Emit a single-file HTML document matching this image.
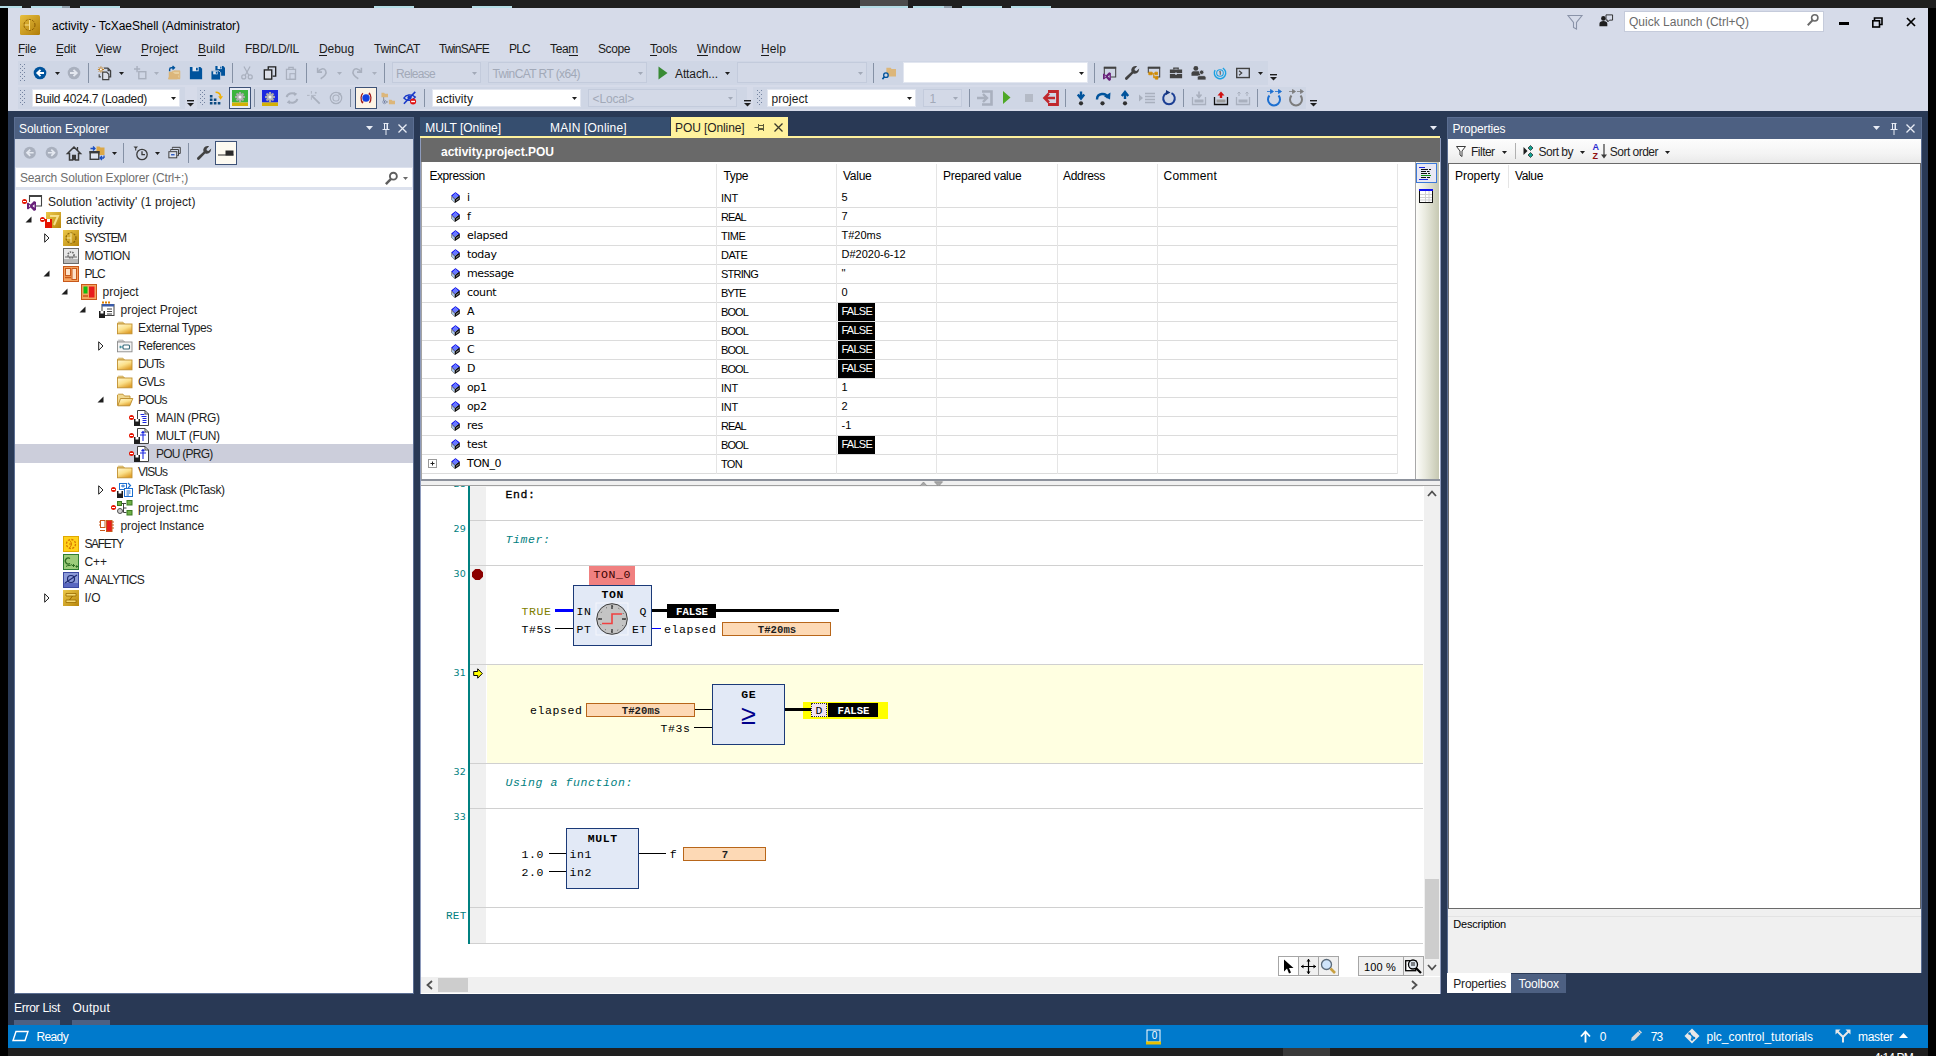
<!DOCTYPE html>
<html><head><meta charset="utf-8"><title>activity - TcXaeShell</title>
<style>
html,body{margin:0;padding:0;}
body{width:1936px;height:1056px;position:relative;overflow:hidden;background:#1e1e1e;font-family:"Liberation Sans",sans-serif;font-size:12px;}
body div,body svg{position:absolute;box-sizing:border-box;}
svg{overflow:visible;}
</style></head><body>
<div style="left:0px;top:0px;width:1936px;height:1056px;background:#1f1f1f;"></div>
<div style="left:0px;top:8px;width:8px;height:1048px;background:#000;"></div>
<div style="left:1928px;top:8px;width:8px;height:1048px;background:#000;"></div>
<div style="left:0px;top:6px;width:22px;height:2px;background:#b4dde6;"></div>
<div style="left:31px;top:6px;width:31px;height:2px;background:#b4dde6;"></div>
<div style="left:80px;top:6px;width:40px;height:2px;background:#b4dde6;"></div>
<div style="left:374px;top:6px;width:40px;height:2px;background:#b4dde6;"></div>
<div style="left:472px;top:6px;width:40px;height:2px;background:#b4dde6;"></div>
<div style="left:860px;top:6px;width:48px;height:2px;background:#b4dde6;"></div>
<div style="left:913px;top:6px;width:31px;height:2px;background:#b4dde6;"></div>
<div style="left:962px;top:6px;width:40px;height:2px;background:#b4dde6;"></div>
<div style="left:1011px;top:6px;width:40px;height:2px;background:#b4dde6;"></div>
<div style="left:62px;top:6px;width:8px;height:2px;background:#8fa0ac;"></div>
<div style="left:944px;top:6px;width:8px;height:2px;background:#8fa0ac;"></div>
<div style="left:860px;top:0px;width:48px;height:6px;background:#4c4c4c;"></div>
<div style="left:8px;top:8px;width:1920px;height:103px;background:#d6dbe9;"></div>
<div style="left:8px;top:111px;width:1920px;height:914px;background:#293955;"></div>
<div style="left:8px;top:1025px;width:1920px;height:23px;background:#007acc;"></div>
<div style="left:1283px;top:1048px;width:47px;height:8px;background:#3a3a3a;"></div>
<div style="left:1874.00px;top:1050.00px;line-height:16px;height:16px;color:#fff;white-space:pre;font-size:12px;font-family:'Liberation Sans',sans-serif;letter-spacing:-0.815px;">4:14 PM</div>
<svg style="left:20px;top:15px;" width="20" height="20" viewBox="0 0 20 20"><defs><linearGradient id="tcg" x1="0" y1="0" x2="1" y2="1"><stop offset="0" stop-color="#e8c040"/><stop offset="1" stop-color="#b07c08"/></linearGradient></defs><rect width="20" height="20" rx="1.500" fill="url(#tcg)"/><circle cx="9.500" cy="10" r="5.500" fill="none" stroke="#8a5a00" stroke-width="1" stroke-dasharray="2.200 1.300"/><path d="M9.500 5v10M5 10h5" stroke="#f8e090" stroke-width="1"/></svg>
<div style="left:52.00px;top:18.00px;line-height:16px;height:16px;color:#000;white-space:pre;font-size:12px;font-family:'Liberation Sans',sans-serif;letter-spacing:-0.032px;">activity - TcXaeShell (Administrator)</div>
<svg style="left:1566.5px;top:13.5px;" width="16" height="16" viewBox="0 0 16 16"><path d="M1 1.500h14L9.500 8.500v6.500L6.500 13.500V8.500z" fill="none" stroke="#8a93a8" stroke-width="1.100"/></svg>
<svg style="left:1599.0px;top:14.0px;" width="14" height="14" viewBox="0 0 16 16"><circle cx="5" cy="5" r="2.600" fill="#1e1e1e"/><path d="M0.500 14v-3c0-2 2-3 4.500-3s4.500 1 4.500 3v3z" fill="#1e1e1e"/><path d="M8 1h7.500v6H12l-2 2V7H8z" fill="#d6dbe9" stroke="#1e1e1e" stroke-width="1"/></svg>
<div style="left:1624px;top:11px;width:200px;height:21px;background:#fff;border:1px solid #c5cbdb;"></div>
<div style="left:1629.00px;top:14.00px;line-height:16px;height:16px;color:#6a6a6a;white-space:pre;font-size:12px;font-family:'Liberation Sans',sans-serif;letter-spacing:0.013px;">Quick Launch (Ctrl+Q)</div>
<svg style="left:1806.0px;top:13.0px;" width="14" height="14" viewBox="0 0 16 16"><circle cx="10" cy="5.500" r="3.600" fill="none" stroke="#6a6a6a" stroke-width="1.800"/><path d="M7.500 8.300L2 14" stroke="#6a6a6a" stroke-width="2.200"/></svg>
<div style="left:1839px;top:22px;width:10px;height:3px;background:#000;"></div>
<svg style="left:1872px;top:17px;" width="11" height="11" viewBox="0 0 11 11"><path d="M2.500 3V1h7.500v6.500H8" fill="none" stroke="#000" stroke-width="1.600"/><rect x="0.800" y="3.800" width="6.700" height="6.200" fill="none" stroke="#000" stroke-width="1.600"/></svg>
<svg style="left:1906px;top:17px;" width="10" height="10" viewBox="0 0 10 10"><path d="M1 1l8 8M9 1l-8 8" stroke="#000" stroke-width="1.700"/></svg>
<div style="left:18.00px;top:41.00px;line-height:16px;height:16px;color:#1b1b1b;white-space:pre;font-size:12px;font-family:'Liberation Sans',sans-serif;letter-spacing:-0.336px;">File</div>
<div style="left:18.0px;top:54.5px;width:6.3px;height:1px;background:#1b1b1b;"></div>
<div style="left:56.00px;top:41.00px;line-height:16px;height:16px;color:#1b1b1b;white-space:pre;font-size:12px;font-family:'Liberation Sans',sans-serif;letter-spacing:-0.172px;">Edit</div>
<div style="left:56.0px;top:54.5px;width:7.2px;height:1px;background:#1b1b1b;"></div>
<div style="left:95.50px;top:41.00px;line-height:16px;height:16px;color:#1b1b1b;white-space:pre;font-size:12px;font-family:'Liberation Sans',sans-serif;letter-spacing:-0.074px;">View</div>
<div style="left:95.5px;top:54.5px;width:7.4px;height:1px;background:#1b1b1b;"></div>
<div style="left:141.00px;top:41.00px;line-height:16px;height:16px;color:#1b1b1b;white-space:pre;font-size:12px;font-family:'Liberation Sans',sans-serif;letter-spacing:-0.051px;">Project</div>
<div style="left:141.0px;top:54.5px;width:7.4px;height:1px;background:#1b1b1b;"></div>
<div style="left:198.00px;top:41.00px;line-height:16px;height:16px;color:#1b1b1b;white-space:pre;font-size:12px;font-family:'Liberation Sans',sans-serif;letter-spacing:0.062px;">Build</div>
<div style="left:198.0px;top:54.5px;width:7.6px;height:1px;background:#1b1b1b;"></div>
<div style="left:245.00px;top:41.00px;line-height:16px;height:16px;color:#1b1b1b;white-space:pre;font-size:12px;font-family:'Liberation Sans',sans-serif;letter-spacing:-0.224px;">FBD/LD/IL</div>
<div style="left:319.00px;top:41.00px;line-height:16px;height:16px;color:#1b1b1b;white-space:pre;font-size:12px;font-family:'Liberation Sans',sans-serif;letter-spacing:-0.075px;">Debug</div>
<div style="left:319.0px;top:54.5px;width:8.1px;height:1px;background:#1b1b1b;"></div>
<div style="left:374.00px;top:41.00px;line-height:16px;height:16px;color:#1b1b1b;white-space:pre;font-size:12px;font-family:'Liberation Sans',sans-serif;letter-spacing:-0.257px;">TwinCAT</div>
<div style="left:439.00px;top:41.00px;line-height:16px;height:16px;color:#1b1b1b;white-space:pre;font-size:12px;font-family:'Liberation Sans',sans-serif;letter-spacing:-0.752px;">TwinSAFE</div>
<div style="left:509.00px;top:41.00px;line-height:16px;height:16px;color:#1b1b1b;white-space:pre;font-size:12px;font-family:'Liberation Sans',sans-serif;letter-spacing:-0.781px;">PLC</div>
<div style="left:550.00px;top:41.00px;line-height:16px;height:16px;color:#1b1b1b;white-space:pre;font-size:12px;font-family:'Liberation Sans',sans-serif;letter-spacing:-0.336px;">Team</div>
<div style="left:568.5px;top:54.5px;width:9.0px;height:1px;background:#1b1b1b;"></div>
<div style="left:598.00px;top:41.00px;line-height:16px;height:16px;color:#1b1b1b;white-space:pre;font-size:12px;font-family:'Liberation Sans',sans-serif;letter-spacing:-0.406px;">Scope</div>
<div style="left:650.00px;top:41.00px;line-height:16px;height:16px;color:#1b1b1b;white-space:pre;font-size:12px;font-family:'Liberation Sans',sans-serif;letter-spacing:-0.203px;">Tools</div>
<div style="left:650.0px;top:54.5px;width:6.6px;height:1px;background:#1b1b1b;"></div>
<div style="left:697.00px;top:41.00px;line-height:16px;height:16px;color:#1b1b1b;white-space:pre;font-size:12px;font-family:'Liberation Sans',sans-serif;letter-spacing:0.219px;">Window</div>
<div style="left:697.0px;top:54.5px;width:11.2px;height:1px;background:#1b1b1b;"></div>
<div style="left:761.00px;top:41.00px;line-height:16px;height:16px;color:#1b1b1b;white-space:pre;font-size:12px;font-family:'Liberation Sans',sans-serif;letter-spacing:0.078px;">Help</div>
<div style="left:761.0px;top:54.5px;width:8.3px;height:1px;background:#1b1b1b;"></div>
<div style="left:18px;top:61px;width:1250px;height:24px;background:#cfd6e5;"></div>
<svg style="left:20px;top:64px;" width="5" height="17" viewBox="0 0 5 17"><rect x="0" y="0" width="1" height="1" fill="#7483a0"/><rect x="4" y="0" width="1" height="1" fill="#7483a0"/><rect x="2" y="2" width="1" height="1" fill="#7483a0"/><rect x="0" y="4" width="1" height="1" fill="#7483a0"/><rect x="4" y="4" width="1" height="1" fill="#7483a0"/><rect x="2" y="6" width="1" height="1" fill="#7483a0"/><rect x="0" y="8" width="1" height="1" fill="#7483a0"/><rect x="4" y="8" width="1" height="1" fill="#7483a0"/><rect x="2" y="10" width="1" height="1" fill="#7483a0"/><rect x="0" y="12" width="1" height="1" fill="#7483a0"/><rect x="4" y="12" width="1" height="1" fill="#7483a0"/><rect x="2" y="14" width="1" height="1" fill="#7483a0"/><rect x="0" y="16" width="1" height="1" fill="#7483a0"/><rect x="4" y="16" width="1" height="1" fill="#7483a0"/></svg>
<svg style="left:32.0px;top:65.0px;" width="16" height="16" viewBox="0 0 16 16"><circle cx="8" cy="8" r="6.300" fill="#00539c"/><path d="M12 8H5.5M8.5 4.8L5.2 8l3.3 3.2" stroke="#fff" stroke-width="1.8" fill="none"/></svg>
<svg style="left:54.5px;top:72.0px;" width="5" height="3" viewBox="0 0 5 3"><path d="M0 0h5l-2.5 3z" fill="#1e1e1e"/></svg>
<svg style="left:66.0px;top:65.0px;" width="16" height="16" viewBox="0 0 16 16"><circle cx="8" cy="8" r="6.300" fill="#a9b0be"/><path d="M4 8h6.5M7.5 4.8L10.8 8l-3.3 3.2" stroke="#e4e8f0" stroke-width="1.8" fill="none"/></svg>
<div style="left:88px;top:63px;width:1px;height:20px;background:#8591a5;"></div>
<svg style="left:97.0px;top:66.0px;" width="14" height="14" viewBox="0 0 16 16"><path d="M8 2.5h4.5l3 3v7h-2.5" fill="none" stroke="#424242" stroke-width="1.5"/><path d="M12 2.5v3.5h3.5" fill="#424242"/><path d="M6.5 7h4.5l2.5 2.5V15.5h-7z" fill="#dcdfe8" stroke="#424242" stroke-width="1.3"/><path d="M2.5 9.5v3h2" fill="none" stroke="#424242" stroke-width="1.3"/><path d="M4.5 0.5v7M1 4h7M2 1.500l5 5M7 1.5l-5 5" stroke="#c27d1a" stroke-width="1.1"/><circle cx="4.5" cy="4" r="1.1" fill="#fff"/></svg>
<svg style="left:119.0px;top:72.0px;" width="5" height="3" viewBox="0 0 5 3"><path d="M0 0h5l-2.5 3z" fill="#1e1e1e"/></svg>
<svg style="left:133.5px;top:66.0px;" width="14" height="14" viewBox="0 0 16 16"><rect x="5.5" y="6.5" width="8" height="8" fill="none" stroke="#a9b0be" stroke-width="1.6"/><path d="M3.5 0v7M0 3.5h7" stroke="#a9b0be" stroke-width="1.6"/></svg>
<svg style="left:154.0px;top:72.0px;" width="5" height="3" viewBox="0 0 5 3"><path d="M0 0h5l-2.5 3z" fill="#a9b0be"/></svg>
<svg style="left:166.5px;top:66.0px;" width="14" height="14" viewBox="0 0 16 16"><path d="M2 6.5h5l1-1.5h7v10H2z" fill="#dcb67a"/><path d="M5.5 6h9v8" fill="#e8d0a0" stroke="#dcb67a"/><path d="M1 15l2.5-6h10.5l-2.5 6z" fill="#dcb67a"/><path d="M3 6V4a2 2 0 0 1 2-2h3M6.3 0l2.2 2-2.2 2" fill="none" stroke="#00539c" stroke-width="1.6"/></svg>
<svg style="left:188.5px;top:66.0px;" width="14" height="14" viewBox="0 0 16 16"><path d="M1 1h12l2 2v12H1z" fill="#00539c"/><rect x="4" y="1" width="7" height="5" fill="#dfe5f0"/><rect x="8" y="2" width="2" height="3" fill="#00539c"/></svg>
<svg style="left:210.5px;top:66.0px;" width="14" height="14" viewBox="0 0 16 16"><path d="M5 0h9l2 2v9H5z" fill="#00539c"/><rect x="7.5" y="0" width="5" height="3.5" fill="#dfe5f0"/><rect x="10.5" y="0.7" width="1.4" height="2.2" fill="#00539c"/><path d="M0 5.5h9l2 2V16H0z" fill="#00539c" stroke="#cfd6e5" stroke-width="1"/><rect x="2.5" y="6" width="5" height="3.5" fill="#dfe5f0"/><rect x="5.5" y="6.6" width="1.4" height="2.2" fill="#00539c"/></svg>
<div style="left:232px;top:63px;width:1px;height:20px;background:#8591a5;"></div>
<svg style="left:240.0px;top:66.0px;" width="14" height="14" viewBox="0 0 16 16"><path d="M4.5 0.5l5.5 10M11.5 0.5L6 10.5" stroke="#a9b0be" stroke-width="1.4" fill="none"/><circle cx="4.3" cy="12.5" r="2.3" fill="none" stroke="#a9b0be" stroke-width="1.4"/><circle cx="11.7" cy="12.5" r="2.3" fill="none" stroke="#a9b0be" stroke-width="1.4"/></svg>
<svg style="left:263.0px;top:66.0px;" width="14" height="14" viewBox="0 0 16 16"><path d="M6 4V1h8.500v10.500H11" fill="none" stroke="#1e1e1e" stroke-width="1.500"/><rect x="1.500" y="4.500" width="8.500" height="10.500" fill="#dcdfe8" stroke="#1e1e1e" stroke-width="1.500"/></svg>
<svg style="left:284.0px;top:66.0px;" width="14" height="14" viewBox="0 0 16 16"><rect x="2.8" y="3.8" width="10.4" height="11.4" fill="none" stroke="#a9b0be" stroke-width="1.4"/><path d="M5.5 4V1.5h5V4" fill="none" stroke="#a9b0be" stroke-width="1.4"/><rect x="6.8" y="8.8" width="6" height="6.4" fill="none" stroke="#a9b0be" stroke-width="1.2"/></svg>
<div style="left:306px;top:63px;width:1px;height:20px;background:#8591a5;"></div>
<svg style="left:314.5px;top:66.0px;" width="14" height="14" viewBox="0 0 16 16"><path d="M3 2v5h5" fill="none" stroke="#a9b0be" stroke-width="1.8"/><path d="M3.5 6.5C6 3 10 2 12 5c2 3.500-1 7-5.500 9.500" fill="none" stroke="#a9b0be" stroke-width="1.8"/></svg>
<svg style="left:337.0px;top:72.0px;" width="5" height="3" viewBox="0 0 5 3"><path d="M0 0h5l-2.5 3z" fill="#a9b0be"/></svg>
<svg style="left:349.5px;top:66.0px;" width="14" height="14" viewBox="0 0 16 16"><path d="M13 2v5H8" fill="none" stroke="#a9b0be" stroke-width="1.8"/><path d="M12.500 6.5C10 3 6 2 4 5c-2 3.500 1 7 5.500 9.500" fill="none" stroke="#a9b0be" stroke-width="1.8"/></svg>
<svg style="left:371.5px;top:72.0px;" width="5" height="3" viewBox="0 0 5 3"><path d="M0 0h5l-2.5 3z" fill="#a9b0be"/></svg>
<div style="left:384px;top:63px;width:1px;height:20px;background:#8591a5;"></div>
<div style="left:392px;top:62px;width:89px;height:21px;background:#d3d9e7;border:1px solid #c3cbdc;"></div>
<div style="left:396.00px;top:66.00px;line-height:16px;height:16px;color:#a2a9b8;white-space:pre;font-size:12px;font-family:'Liberation Sans',sans-serif;letter-spacing:-0.719px;">Release</div>
<svg style="left:472.0px;top:71.5px;" width="5" height="3" viewBox="0 0 5 3"><path d="M0 0h5l-2.5 3z" fill="#a2a9b8"/></svg>
<div style="left:488px;top:62px;width:159px;height:21px;background:#d3d9e7;border:1px solid #c3cbdc;"></div>
<div style="left:492.40px;top:66.00px;line-height:16px;height:16px;color:#a2a9b8;white-space:pre;font-size:12px;font-family:'Liberation Sans',sans-serif;letter-spacing:-0.596px;">TwinCAT RT (x64)</div>
<svg style="left:638.0px;top:71.5px;" width="5" height="3" viewBox="0 0 5 3"><path d="M0 0h5l-2.5 3z" fill="#a2a9b8"/></svg>
<svg style="left:658px;top:66px;" width="10" height="14" viewBox="0 0 10 14"><path d="M0.500 0.500l9 6.500-9 6.500z" fill="#388a34"/></svg>
<div style="left:675.00px;top:66.00px;line-height:16px;height:16px;color:#1b1b1b;white-space:pre;font-size:12px;font-family:'Liberation Sans',sans-serif;letter-spacing:-0.115px;">Attach...</div>
<svg style="left:725.2px;top:72.0px;" width="5" height="3" viewBox="0 0 5 3"><path d="M0 0h5l-2.5 3z" fill="#1e1e1e"/></svg>
<div style="left:737px;top:62px;width:130px;height:21px;background:#d3d9e7;border:1px solid #c3cbdc;"></div>
<svg style="left:858.0px;top:71.5px;" width="5" height="3" viewBox="0 0 5 3"><path d="M0 0h5l-2.5 3z" fill="#a2a9b8"/></svg>
<div style="left:873px;top:63px;width:1px;height:20px;background:#8591a5;"></div>
<svg style="left:881.7px;top:66.0px;" width="14" height="14" viewBox="0 0 16 16"><path d="M5 2h5l1 1.500h5V12H5z" fill="#dcb67a"/><circle cx="4.500" cy="10.500" r="2.600" fill="#cfd6e5" stroke="#00539c" stroke-width="1.500"/><path d="M2.800 12.300L0.500 15" stroke="#00539c" stroke-width="1.800"/></svg>
<div style="left:903px;top:62px;width:185px;height:21px;background:#fff;border:1px solid #e2e6f0;"></div>
<svg style="left:1079.0px;top:71.5px;" width="5" height="3" viewBox="0 0 5 3"><path d="M0 0h5l-2.5 3z" fill="#1e1e1e"/></svg>
<div style="left:1094px;top:63px;width:1px;height:20px;background:#8591a5;"></div>
<svg style="left:1103.0px;top:66.0px;" width="14" height="14" viewBox="0 0 16 16"><path d="M1.500 9V1.500h13v11H9" fill="none" stroke="#424242" stroke-width="1.200"/><rect x="1" y="1" width="14" height="2.200" fill="#424242"/><path d="M1 8.500l2.500 2 3.500-3.500 2 1v8l-2 1-3.500-3.500-2.500 2-1-.7v-5.600zM3.300 12l-1.300-1.300v2.600zM5.500 12l2 1.800v-3.600z" fill="#68217a"/></svg>
<svg style="left:1124.0px;top:65.0px;" width="16" height="16" viewBox="0 0 16 16"><path d="M15 4.500a4.200 4.200 0 0 1-5.800 3.900L3.400 14.600a1.500 1.500 0 0 1-2.100-2.100l6.200-5.800A4.200 4.200 0 0 1 11.500 1c.6 0 1.100.1 1.600.3L10.500 4l.4 1.600 1.600.4 2.700-2.600c.2.400-.2.700-.2 1.100z" fill="#424242"/></svg>
<svg style="left:1147.0px;top:66.0px;" width="14" height="14" viewBox="0 0 16 16"><path d="M1.500 8V1.500h13v11H11" fill="none" stroke="#424242" stroke-width="1.200"/><rect x="1" y="1" width="14" height="2.200" fill="#424242"/><path d="M2 7h4v3H2zM6 8.500h3M7.500 8.500v5h2M9 7h3v3H9zM9.500 12h3v3h-3z" fill="#d18b00" stroke="#d18b00" stroke-width=".8"/></svg>
<svg style="left:1169.4px;top:66.0px;" width="14" height="14" viewBox="0 0 16 16"><path d="M5.500 4V2.500h5V4" fill="none" stroke="#424242" stroke-width="1.400"/><rect x="1" y="4" width="14" height="4" fill="#424242"/><rect x="1" y="9" width="14" height="5" fill="#424242"/><rect x="7" y="7.500" width="2" height="2.500" fill="#cfd6e5"/></svg>
<svg style="left:1190.7px;top:65.2px;" width="15.5" height="15.5" viewBox="0 0 16 16"><circle cx="5" cy="3.500" r="2.500" fill="#424242"/><path d="M0.500 11V8.500c0-1.500 1.500-2 2.500-2h4c1 0 2.500.5 2.500 2V11z" fill="#424242"/><circle cx="11" cy="7.500" r="2.300" fill="#424242" stroke="#cfd6e5" stroke-width=".8"/><path d="M6.500 15.500v-2.500c0-1.500 1.500-2 2.500-2h4c1 0 2.500.5 2.500 2v2.500z" fill="#424242" stroke="#cfd6e5" stroke-width=".8"/></svg>
<svg style="left:1213.4px;top:66.0px;" width="14" height="14" viewBox="0 0 16 16"><circle cx="8" cy="8" r="6.500" fill="none" stroke="#1ba1e2" stroke-width="1.600" stroke-dasharray="30 11" transform="rotate(-60 8 8)"/><circle cx="8" cy="8" r="3.800" fill="none" stroke="#1ba1e2" stroke-width="1.200"/><path d="M7.300 6.700l1-.7v4" fill="none" stroke="#424242" stroke-width="1"/></svg>
<svg style="left:1236.0px;top:66.0px;" width="14" height="14" viewBox="0 0 16 16"><rect x="0.800" y="2.800" width="14.400" height="10.400" fill="none" stroke="#424242" stroke-width="1.600"/><path d="M3.500 5.500L6.500 8l-3 2.500" fill="none" stroke="#424242" stroke-width="1.400"/></svg>
<svg style="left:1257.5px;top:72.0px;" width="5" height="3" viewBox="0 0 5 3"><path d="M0 0h5l-2.5 3z" fill="#1e1e1e"/></svg>
<svg style="left:1270.0px;top:74px;" width="7" height="7" viewBox="0 0 7 7"><rect x="0" y="0" width="7" height="1.4" fill="#1e1e1e"/><path d="M0 3h7l-3.5 3.5z" fill="#1e1e1e"/></svg>
<div style="left:18px;top:87px;width:167px;height:22px;background:#cfd6e5;"></div>
<svg style="left:20px;top:90px;" width="5" height="15" viewBox="0 0 5 15"><rect x="0" y="0" width="1" height="1" fill="#7483a0"/><rect x="4" y="0" width="1" height="1" fill="#7483a0"/><rect x="2" y="2" width="1" height="1" fill="#7483a0"/><rect x="0" y="4" width="1" height="1" fill="#7483a0"/><rect x="4" y="4" width="1" height="1" fill="#7483a0"/><rect x="2" y="6" width="1" height="1" fill="#7483a0"/><rect x="0" y="8" width="1" height="1" fill="#7483a0"/><rect x="4" y="8" width="1" height="1" fill="#7483a0"/><rect x="2" y="10" width="1" height="1" fill="#7483a0"/><rect x="0" y="12" width="1" height="1" fill="#7483a0"/><rect x="4" y="12" width="1" height="1" fill="#7483a0"/><rect x="2" y="14" width="1" height="1" fill="#7483a0"/></svg>
<div style="left:32px;top:89px;width:148px;height:18px;background:#fff;border:1px solid #e2e6f0;"></div>
<div style="left:35.00px;top:91.00px;line-height:16px;height:16px;color:#1b1b1b;white-space:pre;font-size:12px;font-family:'Liberation Sans',sans-serif;letter-spacing:-0.290px;">Build 4024.7 (Loaded)</div>
<svg style="left:171.0px;top:97.0px;" width="5" height="3" viewBox="0 0 5 3"><path d="M0 0h5l-2.5 3z" fill="#1e1e1e"/></svg>
<svg style="left:187.3px;top:100px;" width="7" height="7" viewBox="0 0 7 7"><rect x="0" y="0" width="7" height="1.4" fill="#1e1e1e"/><path d="M0 3h7l-3.5 3.5z" fill="#1e1e1e"/></svg>
<div style="left:197px;top:87px;width:550px;height:22px;background:#cfd6e5;"></div>
<svg style="left:200px;top:90px;" width="5" height="15" viewBox="0 0 5 15"><rect x="0" y="0" width="1" height="1" fill="#7483a0"/><rect x="4" y="0" width="1" height="1" fill="#7483a0"/><rect x="2" y="2" width="1" height="1" fill="#7483a0"/><rect x="0" y="4" width="1" height="1" fill="#7483a0"/><rect x="4" y="4" width="1" height="1" fill="#7483a0"/><rect x="2" y="6" width="1" height="1" fill="#7483a0"/><rect x="0" y="8" width="1" height="1" fill="#7483a0"/><rect x="4" y="8" width="1" height="1" fill="#7483a0"/><rect x="2" y="10" width="1" height="1" fill="#7483a0"/><rect x="0" y="12" width="1" height="1" fill="#7483a0"/><rect x="4" y="12" width="1" height="1" fill="#7483a0"/><rect x="2" y="14" width="1" height="1" fill="#7483a0"/></svg>
<svg style="left:209.4px;top:91.0px;" width="14" height="14" viewBox="0 0 16 16"><path d="M1 4.500h3v3H1zM1 8.500h3v3H1zM1 12.500h3v3H1zM5.500 8.500h3v3h-3zM5.500 12.500h3v3h-3zM10 12.500h3v3h-3z" fill="#0b4a80"/><path d="M7.500 1.500c3.500 0 5.500 2 5.800 5" fill="none" stroke="#f0b000" stroke-width="1.800"/><path d="M10.500 6h5.500l-2.800 4z" fill="#f0b000"/></svg>
<div style="left:229px;top:87px;width:22px;height:22px;background:#fdf4bf;border:1px solid #3d5277;background:#e8ecf5;"></div>
<svg style="left:232.0px;top:90.0px;" width="16" height="16" viewBox="0 0 16 16"><rect x="0" y="0" width="16" height="12.500" fill="#3cb43c"/><rect x="0" y="12.500" width="16" height="3.500" fill="#d4b106"/><rect x="-1.100" y="-5" width="2.200" height="3" transform="translate(8 7) rotate(0)" fill="#a8a8a8"/><rect x="-1.100" y="-5" width="2.200" height="3" transform="translate(8 7) rotate(45)" fill="#a8a8a8"/><rect x="-1.100" y="-5" width="2.200" height="3" transform="translate(8 7) rotate(90)" fill="#a8a8a8"/><rect x="-1.100" y="-5" width="2.200" height="3" transform="translate(8 7) rotate(135)" fill="#a8a8a8"/><rect x="-1.100" y="-5" width="2.200" height="3" transform="translate(8 7) rotate(180)" fill="#a8a8a8"/><rect x="-1.100" y="-5" width="2.200" height="3" transform="translate(8 7) rotate(225)" fill="#a8a8a8"/><rect x="-1.100" y="-5" width="2.200" height="3" transform="translate(8 7) rotate(270)" fill="#a8a8a8"/><rect x="-1.100" y="-5" width="2.200" height="3" transform="translate(8 7) rotate(315)" fill="#a8a8a8"/><circle cx="8" cy="7" r="3.400" fill="#b0b0b0"/><circle cx="8" cy="7" r="1.500" fill="#f4f4f4"/></svg>
<div style="left:254px;top:89px;width:1px;height:18px;background:#8591a5;"></div>
<svg style="left:261.7px;top:90.0px;" width="16" height="16" viewBox="0 0 16 16"><rect x="0" y="0" width="16" height="12.500" fill="#1c28e0"/><rect x="0" y="12.500" width="16" height="3.500" fill="#d4b106"/><rect x="-1.100" y="-5" width="2.200" height="3" transform="translate(8 7) rotate(0)" fill="#a8a8a8"/><rect x="-1.100" y="-5" width="2.200" height="3" transform="translate(8 7) rotate(45)" fill="#a8a8a8"/><rect x="-1.100" y="-5" width="2.200" height="3" transform="translate(8 7) rotate(90)" fill="#a8a8a8"/><rect x="-1.100" y="-5" width="2.200" height="3" transform="translate(8 7) rotate(135)" fill="#a8a8a8"/><rect x="-1.100" y="-5" width="2.200" height="3" transform="translate(8 7) rotate(180)" fill="#a8a8a8"/><rect x="-1.100" y="-5" width="2.200" height="3" transform="translate(8 7) rotate(225)" fill="#a8a8a8"/><rect x="-1.100" y="-5" width="2.200" height="3" transform="translate(8 7) rotate(270)" fill="#a8a8a8"/><rect x="-1.100" y="-5" width="2.200" height="3" transform="translate(8 7) rotate(315)" fill="#a8a8a8"/><circle cx="8" cy="7" r="3.400" fill="#b0b0b0"/><circle cx="8" cy="7" r="1.500" fill="#f4f4f4"/></svg>
<svg style="left:285.0px;top:91.0px;" width="14" height="14" viewBox="0 0 16 16"><path d="M2 7a6 5 0 0 1 10-3M14 9a6 5 0 0 1-10 3" fill="none" stroke="#a9b0be" stroke-width="2.400"/><path d="M10 1l4 2-3 3zM6 15l-4-2 3-3z" fill="#a9b0be"/></svg>
<svg style="left:307.0px;top:91.0px;" width="14" height="14" viewBox="0 0 16 16"><path d="M5 5l9.500 9.500" stroke="#a9b0be" stroke-width="2"/><path d="M5 0v3M5 7v3M0 5h3M7 5h3M10 1v2M9 2h2" stroke="#a9b0be" stroke-width="1"/></svg>
<svg style="left:329.0px;top:91.0px;" width="14" height="14" viewBox="0 0 16 16"><circle cx="8" cy="8" r="6.500" fill="none" stroke="#a9b0be" stroke-width="1.400"/><circle cx="8" cy="8" r="3.500" fill="none" stroke="#a9b0be" stroke-width="1.200"/><path d="M11 1l3.500 2.500-3.500 1.500z" fill="#a9b0be"/></svg>
<div style="left:350px;top:89px;width:1px;height:18px;background:#8591a5;"></div>
<div style="left:355px;top:87px;width:22px;height:22px;background:#fdf4e6;border:1px solid #3d5277;"></div>
<svg style="left:359.0px;top:91.0px;" width="14" height="14" viewBox="0 0 16 16"><circle cx="8" cy="8" r="4.200" fill="#1440e0"/><path d="M4.500 2.500C2 4.500 1.500 10 4 13.500M11.500 2.500C14 4.500 14.500 10 12 13.500" fill="none" stroke="#a01818" stroke-width="1.400"/><path d="M2.500 12l1.500 2.500 1.500-2.500zM10.500 4l1.500-2.500L13.500 4z" fill="#a01818"/></svg>
<svg style="left:381.0px;top:91.0px;" width="14" height="14" viewBox="0 0 16 16"><path d="M0.500 2h3l1 1h3.500v4H0.500z" fill="#dcb67a"/><path d="M9 10h3l1 1h3v4H9z" fill="#dcb67a"/><path d="M3 7v5.500h5" fill="none" stroke="#8a8a8a" stroke-width="1"/><circle cx="4" cy="12.500" r="2" fill="#e8ecf5" stroke="#7080a0" stroke-width=".8"/><path d="M3 12.500h2M4 11.500v2" stroke="#405080" stroke-width=".7"/></svg>
<svg style="left:403.0px;top:91.0px;" width="14" height="14" viewBox="0 0 16 16"><path d="M1 8c2.500-4 8.500-5 13-1-3 4-9 5.500-13 1z" fill="none" stroke="#1838c8" stroke-width="1.600"/><circle cx="7.500" cy="7.500" r="2.400" fill="#1838c8"/><path d="M1 14.500L14 1" stroke="#1838c8" stroke-width="1.800"/><circle cx="11.500" cy="12" r="3.500" fill="#e01010"/><rect x="9.300" y="11.200" width="4.400" height="1.600" fill="#fff"/></svg>
<div style="left:424px;top:89px;width:1px;height:18px;background:#8591a5;"></div>
<div style="left:432px;top:89px;width:149px;height:18px;background:#fff;border:1px solid #e2e6f0;"></div>
<div style="left:436.00px;top:91.00px;line-height:16px;height:16px;color:#1b1b1b;white-space:pre;font-size:12px;font-family:'Liberation Sans',sans-serif;letter-spacing:0.039px;">activity</div>
<svg style="left:572.0px;top:97.0px;" width="5" height="3" viewBox="0 0 5 3"><path d="M0 0h5l-2.5 3z" fill="#1e1e1e"/></svg>
<div style="left:588px;top:89px;width:149px;height:18px;background:#d3d9e7;border:1px solid #c3cbdc;"></div>
<div style="left:592.60px;top:91.00px;line-height:16px;height:16px;color:#a2a9b8;white-space:pre;font-size:12px;font-family:'Liberation Sans',sans-serif;letter-spacing:-0.186px;">&lt;Local&gt;</div>
<svg style="left:728.0px;top:97.0px;" width="5" height="3" viewBox="0 0 5 3"><path d="M0 0h5l-2.5 3z" fill="#a2a9b8"/></svg>
<svg style="left:744.2px;top:100px;" width="7" height="7" viewBox="0 0 7 7"><rect x="0" y="0" width="7" height="1.4" fill="#1e1e1e"/><path d="M0 3h7l-3.5 3.5z" fill="#1e1e1e"/></svg>
<div style="left:753px;top:87px;width:553px;height:22px;background:#cfd6e5;"></div>
<svg style="left:757px;top:90px;" width="5" height="15" viewBox="0 0 5 15"><rect x="0" y="0" width="1" height="1" fill="#7483a0"/><rect x="4" y="0" width="1" height="1" fill="#7483a0"/><rect x="2" y="2" width="1" height="1" fill="#7483a0"/><rect x="0" y="4" width="1" height="1" fill="#7483a0"/><rect x="4" y="4" width="1" height="1" fill="#7483a0"/><rect x="2" y="6" width="1" height="1" fill="#7483a0"/><rect x="0" y="8" width="1" height="1" fill="#7483a0"/><rect x="4" y="8" width="1" height="1" fill="#7483a0"/><rect x="2" y="10" width="1" height="1" fill="#7483a0"/><rect x="0" y="12" width="1" height="1" fill="#7483a0"/><rect x="4" y="12" width="1" height="1" fill="#7483a0"/><rect x="2" y="14" width="1" height="1" fill="#7483a0"/></svg>
<div style="left:767px;top:89px;width:149px;height:18px;background:#fff;border:1px solid #e2e6f0;"></div>
<div style="left:771.50px;top:91.00px;line-height:16px;height:16px;color:#1b1b1b;white-space:pre;font-size:12px;font-family:'Liberation Sans',sans-serif;letter-spacing:0.067px;">project</div>
<svg style="left:907.0px;top:97.0px;" width="5" height="3" viewBox="0 0 5 3"><path d="M0 0h5l-2.5 3z" fill="#1e1e1e"/></svg>
<div style="left:923px;top:89px;width:39px;height:18px;background:#d3d9e7;border:1px solid #c3cbdc;"></div>
<div style="left:929.60px;top:91.00px;line-height:16px;height:16px;color:#a2a9b8;white-space:pre;font-size:12px;font-family:'Liberation Sans',sans-serif;">1</div>
<svg style="left:953.0px;top:97.0px;" width="5" height="3" viewBox="0 0 5 3"><path d="M0 0h5l-2.5 3z" fill="#a2a9b8"/></svg>
<div style="left:969px;top:89px;width:1px;height:18px;background:#8591a5;"></div>
<svg style="left:977.0px;top:90.0px;" width="16" height="16" viewBox="0 0 16 16"><path d="M5 1.500h9.500v13H5" fill="none" stroke="#a9b0be" stroke-width="2.600"/><path d="M0 8h9M6 4l4 4-4 4" fill="none" stroke="#a9b0be" stroke-width="2.400"/></svg>
<svg style="left:1002.5px;top:91px;" width="8" height="13" viewBox="0 0 8 13"><path d="M0 0l7.500 6.500L0 13z" fill="#4ea826"/></svg>
<div style="left:1025px;top:94px;width:8px;height:8px;background:#b4bac6;"></div>
<svg style="left:1043.4px;top:90.0px;" width="16" height="16" viewBox="0 0 16 16"><path d="M5 1.500h9.500v13H5" fill="none" stroke="#c0282d" stroke-width="2.800"/><path d="M12 8H2M6 3.500L1.500 8 6 12.500" fill="none" stroke="#c0282d" stroke-width="2.600"/></svg>
<div style="left:1065px;top:89px;width:1px;height:18px;background:#8591a5;"></div>
<svg style="left:1073.0px;top:90.0px;" width="16" height="16" viewBox="0 0 16 16"><circle cx="8" cy="13.300" r="2.100" fill="#303030"/><path d="M8 1.500v6M4.800 4.500L8 8.500l3.200-4" fill="none" stroke="#00539c" stroke-width="2.400"/></svg>
<svg style="left:1095.0px;top:90.0px;" width="16" height="16" viewBox="0 0 16 16"><circle cx="7.500" cy="13.300" r="2.100" fill="#303030"/><path d="M2 9.500c0-6.500 9-7.500 11-1.500" fill="none" stroke="#00539c" stroke-width="2.400"/><path d="M9 6.500l6 3 .5-7z" fill="#00539c"/></svg>
<svg style="left:1117.0px;top:90.0px;" width="16" height="16" viewBox="0 0 16 16"><circle cx="8" cy="13.300" r="2.100" fill="#303030"/><path d="M8 9v-6M4.800 6L8 2l3.200 4" fill="none" stroke="#00539c" stroke-width="2.400"/></svg>
<svg style="left:1139.0px;top:90.0px;" width="16" height="16" viewBox="0 0 16 16"><path d="M0 4.500l4 3.500-4 3.500z" fill="#a9b0be"/><path d="M6 3.500h10M6 6.500h10M6 9.500h10M6 12.500h10" stroke="#a9b0be" stroke-width="1.400"/></svg>
<svg style="left:1161.0px;top:90.0px;" width="16" height="16" viewBox="0 0 16 16"><path d="M10.500 3.200a5.800 5.800 0 1 1-5 0" fill="none" stroke="#1c3f94" stroke-width="2"/><path d="M5 0v5.500h-.1z M5 0l4.500 2.500L5 5z" fill="#16357c"/></svg>
<div style="left:1183px;top:89px;width:1px;height:18px;background:#8591a5;"></div>
<svg style="left:1191.0px;top:90.0px;" width="16" height="16" viewBox="0 0 16 16"><path d="M1.500 7v7.500h13V7" fill="none" stroke="#a9b0be" stroke-width="1.300"/><rect x="3.500" y="9.500" width="9" height="3" fill="#a9b0be"/><path d="M8 1.500v5M5.500 4.500L8 7.500l2.500-3" fill="none" stroke="#a9b0be" stroke-width="1.600"/></svg>
<svg style="left:1213.0px;top:90.0px;" width="16" height="16" viewBox="0 0 16 16"><path d="M1.500 7v7.500h13V7" fill="none" stroke="#101010" stroke-width="1.300"/><rect x="3.500" y="9.500" width="9" height="3" fill="#9a9a9a"/><path d="M8 1.500l3.500 4h-2.300v2.500h-2.400V5.500H4.500z" fill="#d01010"/></svg>
<svg style="left:1235.0px;top:90.0px;" width="16" height="16" viewBox="0 0 16 16"><path d="M1.500 7v7.500h13V7" fill="none" stroke="#a9b0be" stroke-width="1.300"/><rect x="3.500" y="9.500" width="9" height="3" fill="#a9b0be"/><path d="M4 2v4M2.500 3.500L4 2l1.500 1.500M12 2v4M10.500 3.500L12 2l1.500 1.500" fill="none" stroke="#a9b0be" stroke-width="1"/></svg>
<div style="left:1257px;top:89px;width:1px;height:18px;background:#8591a5;"></div>
<svg style="left:1265.6px;top:90.0px;" width="16" height="16" viewBox="0 0 16 16"><path d="M12.500 5.500a6 6 0 1 1-9 0" fill="none" stroke="#1c6fd0" stroke-width="2"/><path d="M1 1.500h6M7.500 1.500l-3-2v4zM9 1.500h6M15.500 1.500l-3-2v4z" fill="#1c6fd0" stroke="#1c6fd0" stroke-width=".8"/></svg>
<svg style="left:1287.6px;top:90.0px;" width="16" height="16" viewBox="0 0 16 16"><path d="M12.500 5.500a6 6 0 1 1-9 0" fill="none" stroke="#7c7c7c" stroke-width="2"/><path d="M1 1.500h6M7.500 1.500l-3-2v4zM9 1.500h6M15.500 1.500l-3-2v4z" fill="#7c7c7c" stroke="#7c7c7c" stroke-width=".8"/></svg>
<svg style="left:1309.5px;top:100px;" width="7" height="7" viewBox="0 0 7 7"><rect x="0" y="0" width="7" height="1.4" fill="#1e1e1e"/><path d="M0 3h7l-3.5 3.5z" fill="#1e1e1e"/></svg>
<div style="left:14px;top:117px;width:400px;height:877px;background:#4d6082;border:1px solid #5b6e92;"></div>
<div style="left:19.00px;top:121.00px;line-height:16px;height:16px;color:#fff;white-space:pre;font-size:12px;font-family:'Liberation Sans',sans-serif;letter-spacing:-0.082px;">Solution Explorer</div>
<svg style="left:365.5px;top:126.0px;" width="7" height="4" viewBox="0 0 7 4"><path d="M0 0h7l-3.5 4z" fill="#e8ecf5"/></svg>
<svg style="left:381.5px;top:123px;" width="8" height="12" viewBox="0 0 8 12"><path d="M1.500 0.500h5M2.500 0.500v6M5.500 0.500v6M0.500 6.500h7M4 6.500V12" stroke="#e8ecf5" stroke-width="1" fill="none"/><rect x="4.500" y="1" width="1.500" height="5.500" fill="#e8ecf5"/></svg>
<svg style="left:398px;top:124px;" width="9" height="9" viewBox="0 0 9 9"><path d="M0.500 0.500l8 8M8.500 0.500l-8 8" stroke="#e8ecf5" stroke-width="1.300"/></svg>
<div style="left:15px;top:139px;width:398px;height:29px;background:#cfd6e5;"></div>
<svg style="left:22.2px;top:145.2px;" width="15.5" height="15.5" viewBox="0 0 16 16"><circle cx="8" cy="8" r="6.300" fill="#a9b0be"/><path d="M12 8H5.5M8.5 4.8L5.2 8l3.3 3.2" stroke="#e4e8f0" stroke-width="1.8" fill="none"/></svg>
<svg style="left:44.2px;top:145.2px;" width="15.5" height="15.5" viewBox="0 0 16 16"><circle cx="8" cy="8" r="6.300" fill="#a9b0be"/><path d="M4 8h6.5M7.5 4.8L10.8 8l-3.3 3.2" stroke="#e4e8f0" stroke-width="1.8" fill="none"/></svg>
<svg style="left:66.0px;top:145.0px;" width="16" height="16" viewBox="0 0 16 16"><path d="M8 2L1.500 8.500h2V15h3.200v-4.500h2.600V15H12.500V8.500h2z" fill="none" stroke="#3a3a3a" stroke-width="1.500" stroke-linejoin="miter"/><rect x="6.500" y="10.500" width="3" height="4.500" fill="#3a3a3a"/><path d="M11.500 2v3.500" stroke="#3a3a3a" stroke-width="1.300"/></svg>
<svg style="left:89.3px;top:145.0px;" width="16" height="16" viewBox="0 0 16 16"><path d="M7.500 1.500h3l1 1h4V10H7.500z" fill="#dca848"/><rect x="1.200" y="6.700" width="8.600" height="7.600" fill="#dfe3ee" stroke="#3a3a3a" stroke-width="1.400"/><rect x="0.500" y="6" width="10" height="2.400" fill="#3a3a3a"/><path d="M1.500 3.500h4M4 1.500l2 2-2 2M15 13h-3.500M13 11l-2 2 2 2M15 10.500V13" fill="none" stroke="#1c4fc0" stroke-width="1.300"/></svg>
<svg style="left:111.5px;top:152.0px;" width="5" height="3" viewBox="0 0 5 3"><path d="M0 0h5l-2.5 3z" fill="#1e1e1e"/></svg>
<div style="left:123px;top:143px;width:1px;height:20px;background:#8591a5;"></div>
<svg style="left:132.5px;top:145.0px;" width="16" height="16" viewBox="0 0 16 16"><circle cx="9" cy="9.500" r="5.200" fill="none" stroke="#3a3a3a" stroke-width="1.300"/><path d="M9 6.200v3.500h3" fill="none" stroke="#3a3a3a" stroke-width="1.300"/><path d="M0.500 1.500h4.500l-2.200 2.500z" fill="#3a3a3a"/><path d="M2.700 3.500v2" stroke="#3a3a3a" stroke-width="1"/></svg>
<svg style="left:154.5px;top:152.0px;" width="5" height="3" viewBox="0 0 5 3"><path d="M0 0h5l-2.5 3z" fill="#1e1e1e"/></svg>
<svg style="left:167.5px;top:145.5px;" width="14" height="14" viewBox="0 0 16 16"><path d="M5 3V1.500h9v7H12.500" fill="none" stroke="#3a3a3a" stroke-width="1.100"/><path d="M3 5.500V4h9v7H10.500" fill="none" stroke="#3a3a3a" stroke-width="1.100"/><rect x="1" y="6.500" width="9" height="7" fill="#dfe3ee" stroke="#3a3a3a" stroke-width="1.100"/><path d="M3.500 10h4" stroke="#1c4fc0" stroke-width="1.500"/></svg>
<div style="left:188px;top:143px;width:1px;height:20px;background:#8591a5;"></div>
<svg style="left:196.3px;top:145.0px;" width="16" height="16" viewBox="0 0 16 16"><path d="M15 4.500a4.200 4.200 0 0 1-5.800 3.900L3.400 14.600a1.500 1.500 0 0 1-2.100-2.100l6.200-5.800A4.200 4.200 0 0 1 11.500 1c.6 0 1.100.1 1.600.3L10.500 4l.4 1.600 1.600.4 2.700-2.600c.2.400-.2.700-.2 1.100z" fill="#424242"/></svg>
<div style="left:215px;top:141px;width:22px;height:24px;background:#fdfaf1;border:1px solid #3d5277;"></div>
<svg style="left:217.5px;top:150px;" width="16" height="6" viewBox="0 0 16 6"><path d="M0 5h15.500" stroke="#2a2a2a" stroke-width="1"/><rect x="7.500" y="0.500" width="8" height="5" fill="#2a2a2a"/></svg>
<div style="left:15px;top:167px;width:398px;height:23px;background:#dde2ee;"></div>
<div style="left:16px;top:168px;width:396px;height:19px;background:#fff;"></div>
<div style="left:20.00px;top:170.00px;line-height:16px;height:16px;color:#6e6e6e;white-space:pre;font-size:12px;font-family:'Liberation Sans',sans-serif;letter-spacing:-0.154px;">Search Solution Explorer (Ctrl+;)</div>
<svg style="left:384.0px;top:170.5px;" width="15" height="15" viewBox="0 0 16 16"><circle cx="10" cy="5.500" r="3.700" fill="none" stroke="#5e5e5e" stroke-width="2"/><path d="M7.500 8.300L2 14" stroke="#5e5e5e" stroke-width="2.600"/></svg>
<svg style="left:402.5px;top:177.0px;" width="5" height="3" viewBox="0 0 5 3"><path d="M0 0h5l-2.5 3z" fill="#6a6a6a"/></svg>
<div style="left:15px;top:187px;width:398px;height:3px;background:#dde2ee;"></div>
<div style="left:15px;top:190px;width:398px;height:803px;background:#fff;"></div>
<div style="left:15px;top:444px;width:398px;height:19px;background:#cccedb;"></div>
<div style="left:48.00px;top:194.00px;line-height:16px;height:16px;color:#1e1e1e;white-space:pre;font-size:12px;font-family:'Liberation Sans',sans-serif;letter-spacing:0.071px;">Solution 'activity' (1 project)</div>
<svg style="left:27px;top:194px;" width="16" height="16" viewBox="0 0 16 16"><path d="M2.500 8V1.500h12v10.500H9" fill="none" stroke="#424242" stroke-width="1.100"/><rect x="2" y="1" width="13" height="2" fill="#424242"/><path d="M1 8.500l2.500 2 3.500-3.500 2 1v8l-2 1-3.500-3.500-2.500 2-1-.7v-5.600zM3.300 12l-1.300-1.300v2.600zM5.500 12l2 1.800v-3.600z" fill="#68217a"/></svg>
<svg style="left:21.5px;top:199.0px;" width="5" height="5" viewBox="0 0 5 5"><circle cx="2.5" cy="2.5" r="2.5" fill="#e51400"/><rect x="1" y="2" width="3" height="1" fill="#fff"/></svg>
<div style="left:66.00px;top:212.00px;line-height:16px;height:16px;color:#1e1e1e;white-space:pre;font-size:12px;font-family:'Liberation Sans',sans-serif;letter-spacing:0.133px;">activity</div>
<svg style="left:44.5px;top:212px;" width="16" height="16" viewBox="0 0 16 16"><defs><linearGradient id="gg1" x1="0" y1="0" x2="1" y2="1"><stop offset="0" stop-color="#ecc84a"/><stop offset="1" stop-color="#b8860b"/></linearGradient></defs><rect x="1" y="0" width="15" height="16" fill="url(#gg1)"/><path d="M5 4h8l-4 9" fill="none" stroke="#f6e08a" stroke-width="2"/><rect x="0" y="7" width="7" height="9" fill="#e51400"/><rect x="2" y="7" width="3" height="3" fill="#fff"/></svg>
<svg style="left:24.75px;top:216px;" width="7" height="7" viewBox="0 0 7 7"><path d="M6.500 0.500v6h-6z" fill="#1e1e1e"/></svg>
<svg style="left:39.5px;top:217.0px;" width="5" height="5" viewBox="0 0 5 5"><circle cx="2.5" cy="2.5" r="2.5" fill="#e51400"/><rect x="1" y="2" width="3" height="1" fill="#fff"/></svg>
<div style="left:84.50px;top:230.00px;line-height:16px;height:16px;color:#1e1e1e;white-space:pre;font-size:12px;font-family:'Liberation Sans',sans-serif;letter-spacing:-1.349px;">SYSTEM</div>
<svg style="left:63px;top:230px;" width="16" height="16" viewBox="0 0 16 16"><defs><linearGradient id="gg2" x1="0" y1="0" x2="1" y2="1"><stop offset="0" stop-color="#ecc84a"/><stop offset="1" stop-color="#b8860b"/></linearGradient></defs><rect x="0" y="0" width="16" height="16" fill="url(#gg2)"/><circle cx="8" cy="8" r="5" fill="none" stroke="#8a6508" stroke-width="1.200" stroke-dasharray="2 1.200"/><path d="M8 3v10M4 8h4" stroke="#f8e8a0" stroke-width="1"/></svg>
<svg style="left:44px;top:233px;" width="6" height="10" viewBox="0 0 6 10"><path d="M0.700 0.800L5 5 0.700 9.200z" fill="#fff" stroke="#1e1e1e" stroke-width="1"/></svg>
<div style="left:84.50px;top:248.00px;line-height:16px;height:16px;color:#1e1e1e;white-space:pre;font-size:12px;font-family:'Liberation Sans',sans-serif;letter-spacing:-0.417px;">MOTION</div>
<svg style="left:63px;top:248px;" width="16" height="16" viewBox="0 0 16 16"><rect x="0.500" y="0.500" width="15" height="15" fill="#e8e8e8" stroke="#6a6a6a"/><rect x="1" y="11" width="14" height="4" fill="#b8b8b8"/><circle cx="8" cy="7" r="3" fill="none" stroke="#6a6a6a" stroke-width="1.600" stroke-dasharray="1.500 1"/><path d="M2 9h12" stroke="#6a6a6a"/></svg>
<div style="left:84.50px;top:266.00px;line-height:16px;height:16px;color:#1e1e1e;white-space:pre;font-size:12px;font-family:'Liberation Sans',sans-serif;letter-spacing:-1.115px;">PLC</div>
<svg style="left:63px;top:266px;" width="16" height="16" viewBox="0 0 16 16"><rect x="0.500" y="0.500" width="15" height="15" fill="#f4a460" stroke="#c8581a"/><rect x="2.500" y="2.500" width="5" height="7" fill="#fde2c8" stroke="#c8581a"/><rect x="9" y="2.500" width="4.500" height="11" fill="#fde2c8" stroke="#c8581a"/><path d="M2 11.500h6" stroke="#c8581a" stroke-width="1.500"/></svg>
<svg style="left:42.75px;top:270px;" width="7" height="7" viewBox="0 0 7 7"><path d="M6.500 0.500v6h-6z" fill="#1e1e1e"/></svg>
<div style="left:102.50px;top:284.00px;line-height:16px;height:16px;color:#1e1e1e;white-space:pre;font-size:12px;font-family:'Liberation Sans',sans-serif;letter-spacing:0.031px;">project</div>
<svg style="left:81px;top:284px;" width="16" height="16" viewBox="0 0 16 16"><rect x="0.500" y="0.500" width="15" height="15" fill="#f4a460" stroke="#c8581a"/><rect x="2.500" y="2.500" width="4" height="7" fill="#10c010"/><rect x="8" y="2.500" width="5.500" height="11" fill="#e81c1c"/><path d="M2 12h5" stroke="#c8581a" stroke-width="1.500"/></svg>
<svg style="left:60.75px;top:288px;" width="7" height="7" viewBox="0 0 7 7"><path d="M6.500 0.500v6h-6z" fill="#1e1e1e"/></svg>
<div style="left:120.50px;top:302.00px;line-height:16px;height:16px;color:#1e1e1e;white-space:pre;font-size:12px;font-family:'Liberation Sans',sans-serif;letter-spacing:-0.014px;">project Project</div>
<svg style="left:99px;top:302px;" width="16" height="16" viewBox="0 0 16 16"><rect x="3" y="2.500" width="12" height="11" fill="#fff" stroke="#424242"/><rect x="3" y="2" width="12" height="2.500" fill="#3a5ba8"/><path d="M8 7h5M8 9.500h5M8 12h5" stroke="#424242"/><rect x="0" y="9" width="6" height="7" fill="#1e1e1e"/><rect x="1.500" y="9" width="3" height="2.500" fill="#fff"/><path d="M3 0.500h8" stroke="#e08000" stroke-width="2" stroke-dasharray="2 1"/></svg>
<svg style="left:78.75px;top:306px;" width="7" height="7" viewBox="0 0 7 7"><path d="M6.500 0.500v6h-6z" fill="#1e1e1e"/></svg>
<div style="left:138.00px;top:320.00px;line-height:16px;height:16px;color:#1e1e1e;white-space:pre;font-size:12px;font-family:'Liberation Sans',sans-serif;letter-spacing:-0.368px;">External Types</div>
<svg style="left:117px;top:320px;" width="16" height="16" viewBox="0 0 16 16"><defs><linearGradient id="gg7" x1="0" y1="0" x2="0.6" y2="1"><stop offset="0" stop-color="#fff8d4"/><stop offset="0.55" stop-color="#fbe08a"/><stop offset="1" stop-color="#e0a02c"/></linearGradient></defs><path d="M0.5 4V3l1-0.800h4.500l1.500 1.800z" fill="#f0d890" stroke="#c8a048" stroke-width=".8"/><rect x="0.5" y="4" width="14.500" height="9.800" fill="url(#gg7)" stroke="#c09030" stroke-width=".9"/></svg>
<div style="left:138.00px;top:338.00px;line-height:16px;height:16px;color:#1e1e1e;white-space:pre;font-size:12px;font-family:'Liberation Sans',sans-serif;letter-spacing:-0.438px;">References</div>
<svg style="left:117px;top:338px;" width="16" height="16" viewBox="0 0 16 16"><path d="M0.5 4V3l1-0.800h4.500l1.500 1.800z" fill="#f0f0f0" stroke="#a0a0a0" stroke-width=".8"/><rect x="0.5" y="4" width="14.500" height="9.800" fill="#f4f4f4" stroke="#8a8a8a" stroke-width=".9"/><rect x="6" y="7" width="6.500" height="4" rx="1" fill="#fff" stroke="#3a6a7a" stroke-width="1.100"/><path d="M2.500 9h3.500M3.300 7.800v2.400" stroke="#3a8a9a" stroke-width="1.100"/></svg>
<svg style="left:98px;top:341px;" width="6" height="10" viewBox="0 0 6 10"><path d="M0.700 0.800L5 5 0.700 9.200z" fill="#fff" stroke="#1e1e1e" stroke-width="1"/></svg>
<div style="left:138.00px;top:356.00px;line-height:16px;height:16px;color:#1e1e1e;white-space:pre;font-size:12px;font-family:'Liberation Sans',sans-serif;letter-spacing:-0.836px;">DUTs</div>
<svg style="left:117px;top:356px;" width="16" height="16" viewBox="0 0 16 16"><defs><linearGradient id="gg9" x1="0" y1="0" x2="0.6" y2="1"><stop offset="0" stop-color="#fff8d4"/><stop offset="0.55" stop-color="#fbe08a"/><stop offset="1" stop-color="#e0a02c"/></linearGradient></defs><path d="M0.5 4V3l1-0.800h4.500l1.500 1.800z" fill="#f0d890" stroke="#c8a048" stroke-width=".8"/><rect x="0.5" y="4" width="14.500" height="9.800" fill="url(#gg9)" stroke="#c09030" stroke-width=".9"/></svg>
<div style="left:138.00px;top:374.00px;line-height:16px;height:16px;color:#1e1e1e;white-space:pre;font-size:12px;font-family:'Liberation Sans',sans-serif;letter-spacing:-1.004px;">GVLs</div>
<svg style="left:117px;top:374px;" width="16" height="16" viewBox="0 0 16 16"><defs><linearGradient id="gg10" x1="0" y1="0" x2="0.6" y2="1"><stop offset="0" stop-color="#fff8d4"/><stop offset="0.55" stop-color="#fbe08a"/><stop offset="1" stop-color="#e0a02c"/></linearGradient></defs><path d="M0.5 4V3l1-0.800h4.500l1.500 1.800z" fill="#f0d890" stroke="#c8a048" stroke-width=".8"/><rect x="0.5" y="4" width="14.500" height="9.800" fill="url(#gg10)" stroke="#c09030" stroke-width=".9"/></svg>
<div style="left:138.00px;top:392.00px;line-height:16px;height:16px;color:#1e1e1e;white-space:pre;font-size:12px;font-family:'Liberation Sans',sans-serif;letter-spacing:-0.816px;">POUs</div>
<svg style="left:117px;top:392px;" width="16" height="16" viewBox="0 0 16 16"><defs><linearGradient id="gg11" x1="0" y1="0" x2="0.6" y2="1"><stop offset="0" stop-color="#fff8d4"/><stop offset="0.55" stop-color="#fbe08a"/><stop offset="1" stop-color="#e0a02c"/></linearGradient></defs><path d="M0.5 13.500V3l1-0.800h4.500l1.500 1.800h5.500v2.500" fill="#f0d890" stroke="#c09030" stroke-width=".9"/><path d="M0.800 13.800L3.500 6.500h12.300l-3 7.300z" fill="url(#gg11)" stroke="#b88828" stroke-width=".9"/></svg>
<svg style="left:96.75px;top:396px;" width="7" height="7" viewBox="0 0 7 7"><path d="M6.500 0.500v6h-6z" fill="#1e1e1e"/></svg>
<div style="left:156.00px;top:410.00px;line-height:16px;height:16px;color:#1e1e1e;white-space:pre;font-size:12px;font-family:'Liberation Sans',sans-serif;letter-spacing:-0.384px;">MAIN (PRG)</div>
<svg style="left:134px;top:410px;" width="16" height="16" viewBox="0 0 16 16"><path d="M3.500 0.500h7.500l3.500 3.500v11.500H3.500z" fill="#fff" stroke="#424242" stroke-width="1"/><path d="M11 0.500v3.500h3.500" fill="none" stroke="#424242" stroke-width="1"/><rect x="0" y="9" width="6" height="7" fill="#1e1e1e"/><rect x="1.500" y="9" width="3" height="2.500" fill="#fff"/><path d="M6.500 4.500h4M7.500 6.500h5M8.500 8.500h4M8.500 10.500h4M8.500 12.500h4" stroke="#1c28e0" stroke-width="1" fill="none"/></svg>
<svg style="left:128.5px;top:415.0px;" width="5" height="5" viewBox="0 0 5 5"><circle cx="2.5" cy="2.5" r="2.5" fill="#e51400"/><rect x="1" y="2" width="3" height="1" fill="#fff"/></svg>
<div style="left:156.00px;top:428.00px;line-height:16px;height:16px;color:#1e1e1e;white-space:pre;font-size:12px;font-family:'Liberation Sans',sans-serif;letter-spacing:-0.405px;">MULT (FUN)</div>
<svg style="left:134px;top:428px;" width="16" height="16" viewBox="0 0 16 16"><path d="M3.500 0.500h7.500l3.500 3.500v11.500H3.500z" fill="#fff" stroke="#424242" stroke-width="1"/><path d="M11 0.500v3.500h3.500" fill="none" stroke="#424242" stroke-width="1"/><rect x="0" y="9" width="6" height="7" fill="#1e1e1e"/><rect x="1.500" y="9" width="3" height="2.500" fill="#fff"/><path d="M6 7h3V3.500M7.500 5L9 3.500 10.500 5M9 7v6M9 7h3" fill="none" stroke="#1c28e0" stroke-width="1.100"/></svg>
<svg style="left:128.5px;top:433.0px;" width="5" height="5" viewBox="0 0 5 5"><circle cx="2.5" cy="2.5" r="2.5" fill="#e51400"/><rect x="1" y="2" width="3" height="1" fill="#fff"/></svg>
<div style="left:156.00px;top:446.00px;line-height:16px;height:16px;color:#1e1e1e;white-space:pre;font-size:12px;font-family:'Liberation Sans',sans-serif;letter-spacing:-0.760px;">POU (PRG)</div>
<svg style="left:134px;top:446px;" width="16" height="16" viewBox="0 0 16 16"><path d="M3.500 0.500h7.500l3.500 3.500v11.500H3.500z" fill="#fff" stroke="#424242" stroke-width="1"/><path d="M11 0.500v3.500h3.500" fill="none" stroke="#424242" stroke-width="1"/><rect x="0" y="9" width="6" height="7" fill="#1e1e1e"/><rect x="1.500" y="9" width="3" height="2.500" fill="#fff"/><path d="M6 7h3V3.500M7.500 5L9 3.500 10.500 5M9 7v6M9 7h3" fill="none" stroke="#1c28e0" stroke-width="1.100"/></svg>
<svg style="left:128.5px;top:451.0px;" width="5" height="5" viewBox="0 0 5 5"><circle cx="2.5" cy="2.5" r="2.5" fill="#e51400"/><rect x="1" y="2" width="3" height="1" fill="#fff"/></svg>
<div style="left:138.00px;top:464.00px;line-height:16px;height:16px;color:#1e1e1e;white-space:pre;font-size:12px;font-family:'Liberation Sans',sans-serif;letter-spacing:-1.003px;">VISUs</div>
<svg style="left:117px;top:464px;" width="16" height="16" viewBox="0 0 16 16"><defs><linearGradient id="gg15" x1="0" y1="0" x2="0.6" y2="1"><stop offset="0" stop-color="#fff8d4"/><stop offset="0.55" stop-color="#fbe08a"/><stop offset="1" stop-color="#e0a02c"/></linearGradient></defs><path d="M0.5 4V3l1-0.800h4.500l1.500 1.800z" fill="#f0d890" stroke="#c8a048" stroke-width=".8"/><rect x="0.5" y="4" width="14.500" height="9.800" fill="url(#gg15)" stroke="#c09030" stroke-width=".9"/></svg>
<div style="left:138.00px;top:482.00px;line-height:16px;height:16px;color:#1e1e1e;white-space:pre;font-size:12px;font-family:'Liberation Sans',sans-serif;letter-spacing:-0.442px;">PlcTask (PlcTask)</div>
<svg style="left:117px;top:482px;" width="16" height="16" viewBox="0 0 16 16"><rect x="2.500" y="1.500" width="7" height="6" fill="#fff" stroke="#1c6fd0"/><rect x="7.500" y="6.500" width="8" height="8" fill="#fff" stroke="#1c6fd0"/><path d="M9.500 9h4M9.500 11h4M9.500 13h2.500M4 4h4M6 2.500v3" stroke="#1c6fd0" stroke-width="1"/><rect x="0" y="9" width="6" height="7" fill="#1e1e1e"/><rect x="1.500" y="9" width="3" height="2.500" fill="#fff"/><path d="M11 1l2.500 2.500L11 6" fill="none" stroke="#1c6fd0" stroke-width="1.200"/></svg>
<svg style="left:98px;top:485px;" width="6" height="10" viewBox="0 0 6 10"><path d="M0.700 0.800L5 5 0.700 9.200z" fill="#fff" stroke="#1e1e1e" stroke-width="1"/></svg>
<svg style="left:110.5px;top:487.0px;" width="5" height="5" viewBox="0 0 5 5"><circle cx="2.5" cy="2.5" r="2.5" fill="#e51400"/><rect x="1" y="2" width="3" height="1" fill="#fff"/></svg>
<div style="left:138.00px;top:500.00px;line-height:16px;height:16px;color:#1e1e1e;white-space:pre;font-size:12px;font-family:'Liberation Sans',sans-serif;letter-spacing:0.188px;">project.tmc</div>
<svg style="left:117px;top:500px;" width="16" height="16" viewBox="0 0 16 16"><path d="M4 3.500h5M6.500 3.500v9M6.500 8h3M6.500 12.500h3" fill="none" stroke="#424242" stroke-width="1"/><rect x="0.500" y="1.500" width="4" height="4" fill="#70b048" stroke="#3a7a20"/><rect x="10" y="0.500" width="5" height="4.500" fill="#70b048" stroke="#3a7a20"/><rect x="10" y="10.500" width="5" height="4.500" fill="#70b048" stroke="#3a7a20"/><circle cx="3" cy="11" r="2.500" fill="#d0d0d0" stroke="#505050"/></svg>
<svg style="left:110.5px;top:505.0px;" width="5" height="5" viewBox="0 0 5 5"><circle cx="2.5" cy="2.5" r="2.5" fill="#e51400"/><rect x="1" y="2" width="3" height="1" fill="#fff"/></svg>
<div style="left:120.50px;top:518.00px;line-height:16px;height:16px;color:#1e1e1e;white-space:pre;font-size:12px;font-family:'Liberation Sans',sans-serif;letter-spacing:-0.076px;">project Instance</div>
<svg style="left:99px;top:518px;" width="16" height="16" viewBox="0 0 16 16"><rect x="7.500" y="2.500" width="5.500" height="11" fill="#e81c1c" stroke="#c8581a"/><rect x="1.500" y="2.500" width="4.500" height="7" fill="#fff" stroke="#c8581a"/><path d="M0 4h1.500M0 7h1.500M1 12.500h5M13 4h2M13 7h2M13 10h2" stroke="#c8581a" stroke-width="1.200"/></svg>
<div style="left:84.50px;top:536.00px;line-height:16px;height:16px;color:#1e1e1e;white-space:pre;font-size:12px;font-family:'Liberation Sans',sans-serif;letter-spacing:-1.400px;">SAFETY</div>
<svg style="left:63px;top:536px;" width="16" height="16" viewBox="0 0 16 16"><rect x="0.5" y="0.5" width="15" height="15" fill="#ffd21a" stroke="#e0a800"/><circle cx="8" cy="8" r="4.500" fill="none" stroke="#d87800" stroke-width="1.300" stroke-dasharray="2.200 1.300"/><path d="M6.500 4.500C9 6 9 10 6.500 11.500M6 8h3" fill="none" stroke="#d87800" stroke-width="1"/></svg>
<div style="left:84.50px;top:554.00px;line-height:16px;height:16px;color:#1e1e1e;white-space:pre;font-size:12px;font-family:'Liberation Sans',sans-serif;letter-spacing:-0.146px;">C++</div>
<svg style="left:63px;top:554px;" width="16" height="16" viewBox="0 0 16 16"><rect x="0.500" y="0.500" width="15" height="15" fill="#9ccc7a" stroke="#2e7d32"/><path d="M7 4.500a3 3 0 1 0 0 5" fill="none" stroke="#2e6d22" stroke-width="1.300"/><path d="M3 12.500c2-2 4 0 6-2M9 11.500h3M10.500 10v3M12.500 12.500h2.500M13.700 11.200v2.600" fill="none" stroke="#2e6d22" stroke-width="1"/></svg>
<div style="left:84.50px;top:572.00px;line-height:16px;height:16px;color:#1e1e1e;white-space:pre;font-size:12px;font-family:'Liberation Sans',sans-serif;letter-spacing:-0.700px;">ANALYTICS</div>
<svg style="left:63px;top:572px;" width="16" height="16" viewBox="0 0 16 16"><rect x="0.500" y="0.500" width="15" height="15" fill="#8c9ad8" stroke="#3a48a0"/><rect x="1" y="11" width="14" height="4" fill="#5a68c0"/><circle cx="8" cy="7" r="3.500" fill="none" stroke="#1e2a70" stroke-width="1.200"/><path d="M2 11L14 3" stroke="#1e2a70" stroke-width="1.200"/></svg>
<div style="left:84.50px;top:590.00px;line-height:16px;height:16px;color:#1e1e1e;white-space:pre;font-size:12px;font-family:'Liberation Sans',sans-serif;letter-spacing:-0.005px;">I/O</div>
<svg style="left:63px;top:590px;" width="16" height="16" viewBox="0 0 16 16"><defs><linearGradient id="gg22" x1="0" y1="0" x2="1" y2="1"><stop offset="0" stop-color="#ecc84a"/><stop offset="1" stop-color="#b8860b"/></linearGradient></defs><rect x="0" y="0" width="16" height="16" fill="url(#gg22)"/><path d="M3 3.500h10v2.500H9.500l-3 4H13v2.500H3V10h3.500l3-4H3z" fill="#f4d870" stroke="#9a6c00" stroke-width=".8"/></svg>
<svg style="left:44px;top:593px;" width="6" height="10" viewBox="0 0 6 10"><path d="M0.700 0.800L5 5 0.700 9.200z" fill="#fff" stroke="#1e1e1e" stroke-width="1"/></svg>
<div style="left:420px;top:117px;width:250px;height:19px;background:#364e6f;"></div>
<div style="left:425.20px;top:120.00px;line-height:16px;height:16px;color:#fff;white-space:pre;font-size:12px;font-family:'Liberation Sans',sans-serif;letter-spacing:-0.035px;">MULT [Online]</div>
<div style="left:550.00px;top:120.00px;line-height:16px;height:16px;color:#fff;white-space:pre;font-size:12px;font-family:'Liberation Sans',sans-serif;letter-spacing:0.154px;">MAIN [Online]</div>
<div style="left:670.5px;top:117px;width:117.5px;height:19px;background:#fff29d;"></div>
<div style="left:675.00px;top:120.00px;line-height:16px;height:16px;color:#1e1e1e;white-space:pre;font-size:12px;font-family:'Liberation Sans',sans-serif;letter-spacing:-0.092px;">POU [Online]</div>
<svg style="left:754px;top:123px;" width="11" height="9" viewBox="0 0 11 9"><path d="M0.500 4.500h4M4.500 1v7M4.500 2.500h5M4.500 6.500h5M9.500 1v7" stroke="#5a5a3a" stroke-width="1" fill="none"/><rect x="4.500" y="5" width="5" height="1.500" fill="#5a5a3a"/></svg>
<svg style="left:773.5px;top:123px;" width="9" height="9" viewBox="0 0 9 9"><path d="M0.500 0.500l8 8M8.500 0.500l-8 8" stroke="#3a3a2a" stroke-width="1.300"/></svg>
<svg style="left:1430.3px;top:126.0px;" width="7" height="4" viewBox="0 0 7 4"><path d="M0 0h7l-3.5 4z" fill="#e8ecf5"/></svg>
<div style="left:420px;top:136px;width:1020px;height:2px;background:#fff29d;"></div>
<div style="left:420px;top:138px;width:1020px;height:856px;background:#fff;"></div>
<div style="left:420px;top:138px;width:1px;height:856px;background:#8e9bbc;"></div>
<div style="left:421px;top:138px;width:1019px;height:24px;background:#696969;"></div>
<div style="left:441.00px;top:144.00px;line-height:16px;height:16px;color:#fff;white-space:pre;font-size:12px;font-family:'Liberation Sans',sans-serif;font-weight:bold;letter-spacing:-0.008px;">activity.project.POU</div>
<div style="left:429.40px;top:168.00px;line-height:16px;height:16px;color:#000;white-space:pre;font-size:12px;font-family:'Liberation Sans',sans-serif;letter-spacing:-0.402px;">Expression</div>
<div style="left:723.50px;top:168.00px;line-height:16px;height:16px;color:#000;white-space:pre;font-size:12px;font-family:'Liberation Sans',sans-serif;letter-spacing:-0.379px;">Type</div>
<div style="left:843.00px;top:168.00px;line-height:16px;height:16px;color:#000;white-space:pre;font-size:12px;font-family:'Liberation Sans',sans-serif;letter-spacing:-0.263px;">Value</div>
<div style="left:943.00px;top:168.00px;line-height:16px;height:16px;color:#000;white-space:pre;font-size:12px;font-family:'Liberation Sans',sans-serif;letter-spacing:-0.206px;">Prepared value</div>
<div style="left:1063.00px;top:168.00px;line-height:16px;height:16px;color:#000;white-space:pre;font-size:12px;font-family:'Liberation Sans',sans-serif;letter-spacing:-0.290px;">Address</div>
<div style="left:1163.50px;top:168.00px;line-height:16px;height:16px;color:#000;white-space:pre;font-size:12px;font-family:'Liberation Sans',sans-serif;letter-spacing:0.212px;">Comment</div>
<div style="left:716px;top:164px;width:1px;height:24px;background:#e5e5e5;"></div>
<div style="left:836px;top:164px;width:1px;height:24px;background:#e5e5e5;"></div>
<div style="left:936px;top:164px;width:1px;height:24px;background:#e5e5e5;"></div>
<div style="left:1057px;top:164px;width:1px;height:24px;background:#e5e5e5;"></div>
<div style="left:1157px;top:164px;width:1px;height:24px;background:#e5e5e5;"></div>
<div style="left:1397px;top:164px;width:1px;height:24px;background:#e5e5e5;"></div>
<div style="left:422px;top:207px;width:975px;height:1px;background:#dcdcdc;"></div>
<div style="left:716px;top:188px;width:1px;height:20px;background:#e5e5e5;"></div>
<div style="left:836px;top:188px;width:1px;height:20px;background:#e5e5e5;"></div>
<div style="left:936px;top:188px;width:1px;height:20px;background:#e5e5e5;"></div>
<div style="left:1057px;top:188px;width:1px;height:20px;background:#e5e5e5;"></div>
<div style="left:1157px;top:188px;width:1px;height:20px;background:#e5e5e5;"></div>
<div style="left:1397px;top:188px;width:1px;height:20px;background:#e5e5e5;"></div>
<svg style="left:450.5px;top:192px;" width="9" height="11" viewBox="0 0 9 11"><path d="M4.5 0.3L8.7 3.600v4.200L3.800 11 0.3 7.400V3.600z" fill="#8c8c8c"/><path d="M4.5 0.3L8.700 3.600 3.800 7 0.300 3.600z" fill="#1414ff"/><path d="M3.800 7L8.700 3.600v4.200L3.800 11z" fill="#0a0a0a"/><path d="M0.300 3.600L3.800 7v4L0.300 7.400z" fill="#8c8c8c"/><path d="M1.200 5.500l2 2v2.300l-2-2z" fill="#a8d0ff"/><path d="M5 7.800l2.800-2v1.200L5 9z" fill="#8c8c8c"/><g fill="#b8dcff"><rect x="4" y="1.500" width="1" height="1"/><rect x="3" y="2.500" width="1" height="1"/><rect x="5" y="2.500" width="1" height="1"/><rect x="2" y="3.500" width="1" height="1"/><rect x="4" y="3.500" width="1" height="1"/><rect x="6" y="3.500" width="1" height="1"/><rect x="3" y="4.500" width="1" height="1"/><rect x="5" y="4.500" width="1" height="1"/><rect x="4" y="5.500" width="1" height="1"/></g></svg>
<div style="left:467.00px;top:190.00px;line-height:15px;height:15px;color:#000;white-space:pre;font-size:11px;font-family:'DejaVu Sans',sans-serif;">i</div>
<div style="left:721.00px;top:191.00px;line-height:15px;height:15px;color:#000;white-space:pre;font-size:11px;font-family:'Liberation Sans',sans-serif;letter-spacing:-0.245px;">INT</div>
<div style="left:841.50px;top:190.00px;line-height:15px;height:15px;color:#000;white-space:pre;font-size:11px;font-family:'Liberation Sans',sans-serif;">5</div>
<div style="left:422px;top:226px;width:975px;height:1px;background:#dcdcdc;"></div>
<div style="left:716px;top:207px;width:1px;height:20px;background:#e5e5e5;"></div>
<div style="left:836px;top:207px;width:1px;height:20px;background:#e5e5e5;"></div>
<div style="left:936px;top:207px;width:1px;height:20px;background:#e5e5e5;"></div>
<div style="left:1057px;top:207px;width:1px;height:20px;background:#e5e5e5;"></div>
<div style="left:1157px;top:207px;width:1px;height:20px;background:#e5e5e5;"></div>
<div style="left:1397px;top:207px;width:1px;height:20px;background:#e5e5e5;"></div>
<svg style="left:450.5px;top:211px;" width="9" height="11" viewBox="0 0 9 11"><path d="M4.5 0.3L8.7 3.600v4.200L3.800 11 0.3 7.400V3.600z" fill="#8c8c8c"/><path d="M4.5 0.3L8.700 3.600 3.800 7 0.300 3.600z" fill="#1414ff"/><path d="M3.800 7L8.700 3.600v4.200L3.800 11z" fill="#0a0a0a"/><path d="M0.300 3.600L3.800 7v4L0.300 7.400z" fill="#8c8c8c"/><path d="M1.200 5.500l2 2v2.300l-2-2z" fill="#a8d0ff"/><path d="M5 7.800l2.800-2v1.200L5 9z" fill="#8c8c8c"/><g fill="#b8dcff"><rect x="4" y="1.500" width="1" height="1"/><rect x="3" y="2.500" width="1" height="1"/><rect x="5" y="2.500" width="1" height="1"/><rect x="2" y="3.500" width="1" height="1"/><rect x="4" y="3.500" width="1" height="1"/><rect x="6" y="3.500" width="1" height="1"/><rect x="3" y="4.500" width="1" height="1"/><rect x="5" y="4.500" width="1" height="1"/><rect x="4" y="5.500" width="1" height="1"/></g></svg>
<div style="left:467.00px;top:209.00px;line-height:15px;height:15px;color:#000;white-space:pre;font-size:11px;font-family:'DejaVu Sans',sans-serif;">f</div>
<div style="left:721.00px;top:210.00px;line-height:15px;height:15px;color:#000;white-space:pre;font-size:11px;font-family:'Liberation Sans',sans-serif;letter-spacing:-1.013px;">REAL</div>
<div style="left:841.50px;top:209.00px;line-height:15px;height:15px;color:#000;white-space:pre;font-size:11px;font-family:'Liberation Sans',sans-serif;">7</div>
<div style="left:422px;top:245px;width:975px;height:1px;background:#dcdcdc;"></div>
<div style="left:716px;top:226px;width:1px;height:20px;background:#e5e5e5;"></div>
<div style="left:836px;top:226px;width:1px;height:20px;background:#e5e5e5;"></div>
<div style="left:936px;top:226px;width:1px;height:20px;background:#e5e5e5;"></div>
<div style="left:1057px;top:226px;width:1px;height:20px;background:#e5e5e5;"></div>
<div style="left:1157px;top:226px;width:1px;height:20px;background:#e5e5e5;"></div>
<div style="left:1397px;top:226px;width:1px;height:20px;background:#e5e5e5;"></div>
<svg style="left:450.5px;top:230px;" width="9" height="11" viewBox="0 0 9 11"><path d="M4.5 0.3L8.7 3.600v4.200L3.800 11 0.3 7.400V3.600z" fill="#8c8c8c"/><path d="M4.5 0.3L8.700 3.600 3.800 7 0.300 3.600z" fill="#1414ff"/><path d="M3.800 7L8.700 3.600v4.200L3.800 11z" fill="#0a0a0a"/><path d="M0.300 3.600L3.800 7v4L0.300 7.400z" fill="#8c8c8c"/><path d="M1.200 5.500l2 2v2.300l-2-2z" fill="#a8d0ff"/><path d="M5 7.800l2.800-2v1.200L5 9z" fill="#8c8c8c"/><g fill="#b8dcff"><rect x="4" y="1.500" width="1" height="1"/><rect x="3" y="2.500" width="1" height="1"/><rect x="5" y="2.500" width="1" height="1"/><rect x="2" y="3.500" width="1" height="1"/><rect x="4" y="3.500" width="1" height="1"/><rect x="6" y="3.500" width="1" height="1"/><rect x="3" y="4.500" width="1" height="1"/><rect x="5" y="4.500" width="1" height="1"/><rect x="4" y="5.500" width="1" height="1"/></g></svg>
<div style="left:467.00px;top:228.00px;line-height:15px;height:15px;color:#000;white-space:pre;font-size:11px;font-family:'DejaVu Sans',sans-serif;letter-spacing:-0.338px;">elapsed</div>
<div style="left:721.00px;top:229.00px;line-height:15px;height:15px;color:#000;white-space:pre;font-size:11px;font-family:'Liberation Sans',sans-serif;letter-spacing:-0.520px;">TIME</div>
<div style="left:841.50px;top:228.00px;line-height:15px;height:15px;color:#000;white-space:pre;font-size:11px;font-family:'Liberation Sans',sans-serif;">T#20ms</div>
<div style="left:422px;top:264px;width:975px;height:1px;background:#dcdcdc;"></div>
<div style="left:716px;top:245px;width:1px;height:20px;background:#e5e5e5;"></div>
<div style="left:836px;top:245px;width:1px;height:20px;background:#e5e5e5;"></div>
<div style="left:936px;top:245px;width:1px;height:20px;background:#e5e5e5;"></div>
<div style="left:1057px;top:245px;width:1px;height:20px;background:#e5e5e5;"></div>
<div style="left:1157px;top:245px;width:1px;height:20px;background:#e5e5e5;"></div>
<div style="left:1397px;top:245px;width:1px;height:20px;background:#e5e5e5;"></div>
<svg style="left:450.5px;top:249px;" width="9" height="11" viewBox="0 0 9 11"><path d="M4.5 0.3L8.7 3.600v4.200L3.800 11 0.3 7.400V3.600z" fill="#8c8c8c"/><path d="M4.5 0.3L8.700 3.600 3.800 7 0.300 3.600z" fill="#1414ff"/><path d="M3.800 7L8.700 3.600v4.200L3.800 11z" fill="#0a0a0a"/><path d="M0.300 3.600L3.800 7v4L0.300 7.400z" fill="#8c8c8c"/><path d="M1.200 5.500l2 2v2.300l-2-2z" fill="#a8d0ff"/><path d="M5 7.800l2.800-2v1.200L5 9z" fill="#8c8c8c"/><g fill="#b8dcff"><rect x="4" y="1.500" width="1" height="1"/><rect x="3" y="2.500" width="1" height="1"/><rect x="5" y="2.500" width="1" height="1"/><rect x="2" y="3.500" width="1" height="1"/><rect x="4" y="3.500" width="1" height="1"/><rect x="6" y="3.500" width="1" height="1"/><rect x="3" y="4.500" width="1" height="1"/><rect x="5" y="4.500" width="1" height="1"/><rect x="4" y="5.500" width="1" height="1"/></g></svg>
<div style="left:467.00px;top:247.00px;line-height:15px;height:15px;color:#000;white-space:pre;font-size:11px;font-family:'DejaVu Sans',sans-serif;letter-spacing:-0.344px;">today</div>
<div style="left:721.00px;top:248.00px;line-height:15px;height:15px;color:#000;white-space:pre;font-size:11px;font-family:'Liberation Sans',sans-serif;letter-spacing:-0.558px;">DATE</div>
<div style="left:841.50px;top:247.00px;line-height:15px;height:15px;color:#000;white-space:pre;font-size:11px;font-family:'Liberation Sans',sans-serif;">D#2020-6-12</div>
<div style="left:422px;top:283px;width:975px;height:1px;background:#dcdcdc;"></div>
<div style="left:716px;top:264px;width:1px;height:20px;background:#e5e5e5;"></div>
<div style="left:836px;top:264px;width:1px;height:20px;background:#e5e5e5;"></div>
<div style="left:936px;top:264px;width:1px;height:20px;background:#e5e5e5;"></div>
<div style="left:1057px;top:264px;width:1px;height:20px;background:#e5e5e5;"></div>
<div style="left:1157px;top:264px;width:1px;height:20px;background:#e5e5e5;"></div>
<div style="left:1397px;top:264px;width:1px;height:20px;background:#e5e5e5;"></div>
<svg style="left:450.5px;top:268px;" width="9" height="11" viewBox="0 0 9 11"><path d="M4.5 0.3L8.7 3.600v4.200L3.800 11 0.3 7.400V3.600z" fill="#8c8c8c"/><path d="M4.5 0.3L8.700 3.600 3.800 7 0.300 3.600z" fill="#1414ff"/><path d="M3.800 7L8.700 3.600v4.200L3.800 11z" fill="#0a0a0a"/><path d="M0.300 3.600L3.800 7v4L0.300 7.400z" fill="#8c8c8c"/><path d="M1.200 5.500l2 2v2.300l-2-2z" fill="#a8d0ff"/><path d="M5 7.800l2.800-2v1.200L5 9z" fill="#8c8c8c"/><g fill="#b8dcff"><rect x="4" y="1.500" width="1" height="1"/><rect x="3" y="2.500" width="1" height="1"/><rect x="5" y="2.500" width="1" height="1"/><rect x="2" y="3.500" width="1" height="1"/><rect x="4" y="3.500" width="1" height="1"/><rect x="6" y="3.500" width="1" height="1"/><rect x="3" y="4.500" width="1" height="1"/><rect x="5" y="4.500" width="1" height="1"/><rect x="4" y="5.500" width="1" height="1"/></g></svg>
<div style="left:467.00px;top:266.00px;line-height:15px;height:15px;color:#000;white-space:pre;font-size:11px;font-family:'DejaVu Sans',sans-serif;letter-spacing:-0.388px;">message</div>
<div style="left:721.00px;top:267.00px;line-height:15px;height:15px;color:#000;white-space:pre;font-size:11px;font-family:'Liberation Sans',sans-serif;letter-spacing:-0.760px;">STRING</div>
<div style="left:841.50px;top:266.00px;line-height:15px;height:15px;color:#000;white-space:pre;font-size:11px;font-family:'Liberation Sans',sans-serif;">''</div>
<div style="left:422px;top:302px;width:975px;height:1px;background:#dcdcdc;"></div>
<div style="left:716px;top:283px;width:1px;height:20px;background:#e5e5e5;"></div>
<div style="left:836px;top:283px;width:1px;height:20px;background:#e5e5e5;"></div>
<div style="left:936px;top:283px;width:1px;height:20px;background:#e5e5e5;"></div>
<div style="left:1057px;top:283px;width:1px;height:20px;background:#e5e5e5;"></div>
<div style="left:1157px;top:283px;width:1px;height:20px;background:#e5e5e5;"></div>
<div style="left:1397px;top:283px;width:1px;height:20px;background:#e5e5e5;"></div>
<svg style="left:450.5px;top:287px;" width="9" height="11" viewBox="0 0 9 11"><path d="M4.5 0.3L8.7 3.600v4.200L3.800 11 0.3 7.400V3.600z" fill="#8c8c8c"/><path d="M4.5 0.3L8.700 3.600 3.800 7 0.300 3.600z" fill="#1414ff"/><path d="M3.800 7L8.700 3.600v4.200L3.800 11z" fill="#0a0a0a"/><path d="M0.300 3.600L3.800 7v4L0.300 7.400z" fill="#8c8c8c"/><path d="M1.200 5.500l2 2v2.300l-2-2z" fill="#a8d0ff"/><path d="M5 7.800l2.800-2v1.200L5 9z" fill="#8c8c8c"/><g fill="#b8dcff"><rect x="4" y="1.500" width="1" height="1"/><rect x="3" y="2.500" width="1" height="1"/><rect x="5" y="2.500" width="1" height="1"/><rect x="2" y="3.500" width="1" height="1"/><rect x="4" y="3.500" width="1" height="1"/><rect x="6" y="3.500" width="1" height="1"/><rect x="3" y="4.500" width="1" height="1"/><rect x="5" y="4.500" width="1" height="1"/><rect x="4" y="5.500" width="1" height="1"/></g></svg>
<div style="left:467.00px;top:285.00px;line-height:15px;height:15px;color:#000;white-space:pre;font-size:11px;font-family:'DejaVu Sans',sans-serif;letter-spacing:-0.342px;">count</div>
<div style="left:721.00px;top:286.00px;line-height:15px;height:15px;color:#000;white-space:pre;font-size:11px;font-family:'Liberation Sans',sans-serif;letter-spacing:-1.134px;">BYTE</div>
<div style="left:841.50px;top:285.00px;line-height:15px;height:15px;color:#000;white-space:pre;font-size:11px;font-family:'Liberation Sans',sans-serif;">0</div>
<div style="left:422px;top:321px;width:975px;height:1px;background:#dcdcdc;"></div>
<div style="left:716px;top:302px;width:1px;height:20px;background:#e5e5e5;"></div>
<div style="left:836px;top:302px;width:1px;height:20px;background:#e5e5e5;"></div>
<div style="left:936px;top:302px;width:1px;height:20px;background:#e5e5e5;"></div>
<div style="left:1057px;top:302px;width:1px;height:20px;background:#e5e5e5;"></div>
<div style="left:1157px;top:302px;width:1px;height:20px;background:#e5e5e5;"></div>
<div style="left:1397px;top:302px;width:1px;height:20px;background:#e5e5e5;"></div>
<svg style="left:450.5px;top:306px;" width="9" height="11" viewBox="0 0 9 11"><path d="M4.5 0.3L8.7 3.600v4.200L3.800 11 0.3 7.400V3.600z" fill="#8c8c8c"/><path d="M4.5 0.3L8.700 3.600 3.800 7 0.300 3.600z" fill="#1414ff"/><path d="M3.800 7L8.700 3.600v4.200L3.800 11z" fill="#0a0a0a"/><path d="M0.300 3.600L3.800 7v4L0.300 7.400z" fill="#8c8c8c"/><path d="M1.200 5.500l2 2v2.300l-2-2z" fill="#a8d0ff"/><path d="M5 7.800l2.800-2v1.200L5 9z" fill="#8c8c8c"/><g fill="#b8dcff"><rect x="4" y="1.500" width="1" height="1"/><rect x="3" y="2.500" width="1" height="1"/><rect x="5" y="2.500" width="1" height="1"/><rect x="2" y="3.500" width="1" height="1"/><rect x="4" y="3.500" width="1" height="1"/><rect x="6" y="3.500" width="1" height="1"/><rect x="3" y="4.500" width="1" height="1"/><rect x="5" y="4.500" width="1" height="1"/><rect x="4" y="5.500" width="1" height="1"/></g></svg>
<div style="left:467.00px;top:304.00px;line-height:15px;height:15px;color:#000;white-space:pre;font-size:11px;font-family:'DejaVu Sans',sans-serif;">A</div>
<div style="left:721.00px;top:305.00px;line-height:15px;height:15px;color:#000;white-space:pre;font-size:11px;font-family:'Liberation Sans',sans-serif;letter-spacing:-0.920px;">BOOL</div>
<div style="left:838px;top:303px;width:37px;height:18px;background:#000;"></div>
<div style="left:841.50px;top:304.00px;line-height:15px;height:15px;color:#fff;white-space:pre;font-size:11px;font-family:'Liberation Sans',sans-serif;letter-spacing:-0.750px;">FALSE</div>
<div style="left:422px;top:340px;width:975px;height:1px;background:#dcdcdc;"></div>
<div style="left:716px;top:321px;width:1px;height:20px;background:#e5e5e5;"></div>
<div style="left:836px;top:321px;width:1px;height:20px;background:#e5e5e5;"></div>
<div style="left:936px;top:321px;width:1px;height:20px;background:#e5e5e5;"></div>
<div style="left:1057px;top:321px;width:1px;height:20px;background:#e5e5e5;"></div>
<div style="left:1157px;top:321px;width:1px;height:20px;background:#e5e5e5;"></div>
<div style="left:1397px;top:321px;width:1px;height:20px;background:#e5e5e5;"></div>
<svg style="left:450.5px;top:325px;" width="9" height="11" viewBox="0 0 9 11"><path d="M4.5 0.3L8.7 3.600v4.200L3.800 11 0.3 7.400V3.600z" fill="#8c8c8c"/><path d="M4.5 0.3L8.700 3.600 3.800 7 0.300 3.600z" fill="#1414ff"/><path d="M3.800 7L8.700 3.600v4.200L3.800 11z" fill="#0a0a0a"/><path d="M0.300 3.600L3.800 7v4L0.300 7.400z" fill="#8c8c8c"/><path d="M1.200 5.500l2 2v2.300l-2-2z" fill="#a8d0ff"/><path d="M5 7.800l2.800-2v1.200L5 9z" fill="#8c8c8c"/><g fill="#b8dcff"><rect x="4" y="1.500" width="1" height="1"/><rect x="3" y="2.500" width="1" height="1"/><rect x="5" y="2.500" width="1" height="1"/><rect x="2" y="3.500" width="1" height="1"/><rect x="4" y="3.500" width="1" height="1"/><rect x="6" y="3.500" width="1" height="1"/><rect x="3" y="4.500" width="1" height="1"/><rect x="5" y="4.500" width="1" height="1"/><rect x="4" y="5.500" width="1" height="1"/></g></svg>
<div style="left:467.00px;top:323.00px;line-height:15px;height:15px;color:#000;white-space:pre;font-size:11px;font-family:'DejaVu Sans',sans-serif;">B</div>
<div style="left:721.00px;top:324.00px;line-height:15px;height:15px;color:#000;white-space:pre;font-size:11px;font-family:'Liberation Sans',sans-serif;letter-spacing:-0.920px;">BOOL</div>
<div style="left:838px;top:322px;width:37px;height:18px;background:#000;"></div>
<div style="left:841.50px;top:323.00px;line-height:15px;height:15px;color:#fff;white-space:pre;font-size:11px;font-family:'Liberation Sans',sans-serif;letter-spacing:-0.750px;">FALSE</div>
<div style="left:422px;top:359px;width:975px;height:1px;background:#dcdcdc;"></div>
<div style="left:716px;top:340px;width:1px;height:20px;background:#e5e5e5;"></div>
<div style="left:836px;top:340px;width:1px;height:20px;background:#e5e5e5;"></div>
<div style="left:936px;top:340px;width:1px;height:20px;background:#e5e5e5;"></div>
<div style="left:1057px;top:340px;width:1px;height:20px;background:#e5e5e5;"></div>
<div style="left:1157px;top:340px;width:1px;height:20px;background:#e5e5e5;"></div>
<div style="left:1397px;top:340px;width:1px;height:20px;background:#e5e5e5;"></div>
<svg style="left:450.5px;top:344px;" width="9" height="11" viewBox="0 0 9 11"><path d="M4.5 0.3L8.7 3.600v4.200L3.800 11 0.3 7.400V3.600z" fill="#8c8c8c"/><path d="M4.5 0.3L8.700 3.600 3.800 7 0.300 3.600z" fill="#1414ff"/><path d="M3.800 7L8.700 3.600v4.200L3.800 11z" fill="#0a0a0a"/><path d="M0.300 3.600L3.800 7v4L0.300 7.400z" fill="#8c8c8c"/><path d="M1.200 5.500l2 2v2.300l-2-2z" fill="#a8d0ff"/><path d="M5 7.800l2.800-2v1.200L5 9z" fill="#8c8c8c"/><g fill="#b8dcff"><rect x="4" y="1.500" width="1" height="1"/><rect x="3" y="2.500" width="1" height="1"/><rect x="5" y="2.500" width="1" height="1"/><rect x="2" y="3.500" width="1" height="1"/><rect x="4" y="3.500" width="1" height="1"/><rect x="6" y="3.500" width="1" height="1"/><rect x="3" y="4.500" width="1" height="1"/><rect x="5" y="4.500" width="1" height="1"/><rect x="4" y="5.500" width="1" height="1"/></g></svg>
<div style="left:467.00px;top:342.00px;line-height:15px;height:15px;color:#000;white-space:pre;font-size:11px;font-family:'DejaVu Sans',sans-serif;">C</div>
<div style="left:721.00px;top:343.00px;line-height:15px;height:15px;color:#000;white-space:pre;font-size:11px;font-family:'Liberation Sans',sans-serif;letter-spacing:-0.920px;">BOOL</div>
<div style="left:838px;top:341px;width:37px;height:18px;background:#000;"></div>
<div style="left:841.50px;top:342.00px;line-height:15px;height:15px;color:#fff;white-space:pre;font-size:11px;font-family:'Liberation Sans',sans-serif;letter-spacing:-0.750px;">FALSE</div>
<div style="left:422px;top:378px;width:975px;height:1px;background:#dcdcdc;"></div>
<div style="left:716px;top:359px;width:1px;height:20px;background:#e5e5e5;"></div>
<div style="left:836px;top:359px;width:1px;height:20px;background:#e5e5e5;"></div>
<div style="left:936px;top:359px;width:1px;height:20px;background:#e5e5e5;"></div>
<div style="left:1057px;top:359px;width:1px;height:20px;background:#e5e5e5;"></div>
<div style="left:1157px;top:359px;width:1px;height:20px;background:#e5e5e5;"></div>
<div style="left:1397px;top:359px;width:1px;height:20px;background:#e5e5e5;"></div>
<svg style="left:450.5px;top:363px;" width="9" height="11" viewBox="0 0 9 11"><path d="M4.5 0.3L8.7 3.600v4.200L3.800 11 0.3 7.400V3.600z" fill="#8c8c8c"/><path d="M4.5 0.3L8.700 3.600 3.800 7 0.300 3.600z" fill="#1414ff"/><path d="M3.800 7L8.700 3.600v4.200L3.800 11z" fill="#0a0a0a"/><path d="M0.300 3.600L3.800 7v4L0.300 7.400z" fill="#8c8c8c"/><path d="M1.200 5.500l2 2v2.300l-2-2z" fill="#a8d0ff"/><path d="M5 7.800l2.800-2v1.200L5 9z" fill="#8c8c8c"/><g fill="#b8dcff"><rect x="4" y="1.500" width="1" height="1"/><rect x="3" y="2.500" width="1" height="1"/><rect x="5" y="2.500" width="1" height="1"/><rect x="2" y="3.500" width="1" height="1"/><rect x="4" y="3.500" width="1" height="1"/><rect x="6" y="3.500" width="1" height="1"/><rect x="3" y="4.500" width="1" height="1"/><rect x="5" y="4.500" width="1" height="1"/><rect x="4" y="5.500" width="1" height="1"/></g></svg>
<div style="left:467.00px;top:361.00px;line-height:15px;height:15px;color:#000;white-space:pre;font-size:11px;font-family:'DejaVu Sans',sans-serif;">D</div>
<div style="left:721.00px;top:362.00px;line-height:15px;height:15px;color:#000;white-space:pre;font-size:11px;font-family:'Liberation Sans',sans-serif;letter-spacing:-0.920px;">BOOL</div>
<div style="left:838px;top:360px;width:37px;height:18px;background:#000;"></div>
<div style="left:841.50px;top:361.00px;line-height:15px;height:15px;color:#fff;white-space:pre;font-size:11px;font-family:'Liberation Sans',sans-serif;letter-spacing:-0.750px;">FALSE</div>
<div style="left:422px;top:397px;width:975px;height:1px;background:#dcdcdc;"></div>
<div style="left:716px;top:378px;width:1px;height:20px;background:#e5e5e5;"></div>
<div style="left:836px;top:378px;width:1px;height:20px;background:#e5e5e5;"></div>
<div style="left:936px;top:378px;width:1px;height:20px;background:#e5e5e5;"></div>
<div style="left:1057px;top:378px;width:1px;height:20px;background:#e5e5e5;"></div>
<div style="left:1157px;top:378px;width:1px;height:20px;background:#e5e5e5;"></div>
<div style="left:1397px;top:378px;width:1px;height:20px;background:#e5e5e5;"></div>
<svg style="left:450.5px;top:382px;" width="9" height="11" viewBox="0 0 9 11"><path d="M4.5 0.3L8.7 3.600v4.200L3.800 11 0.3 7.400V3.600z" fill="#8c8c8c"/><path d="M4.5 0.3L8.700 3.600 3.800 7 0.300 3.600z" fill="#1414ff"/><path d="M3.800 7L8.700 3.600v4.200L3.800 11z" fill="#0a0a0a"/><path d="M0.300 3.600L3.800 7v4L0.300 7.400z" fill="#8c8c8c"/><path d="M1.200 5.500l2 2v2.300l-2-2z" fill="#a8d0ff"/><path d="M5 7.800l2.800-2v1.200L5 9z" fill="#8c8c8c"/><g fill="#b8dcff"><rect x="4" y="1.500" width="1" height="1"/><rect x="3" y="2.500" width="1" height="1"/><rect x="5" y="2.500" width="1" height="1"/><rect x="2" y="3.500" width="1" height="1"/><rect x="4" y="3.500" width="1" height="1"/><rect x="6" y="3.500" width="1" height="1"/><rect x="3" y="4.500" width="1" height="1"/><rect x="5" y="4.500" width="1" height="1"/><rect x="4" y="5.500" width="1" height="1"/></g></svg>
<div style="left:467.00px;top:380.00px;line-height:15px;height:15px;color:#000;white-space:pre;font-size:11px;font-family:'DejaVu Sans',sans-serif;letter-spacing:-0.380px;">op1</div>
<div style="left:721.00px;top:381.00px;line-height:15px;height:15px;color:#000;white-space:pre;font-size:11px;font-family:'Liberation Sans',sans-serif;letter-spacing:-0.245px;">INT</div>
<div style="left:841.50px;top:380.00px;line-height:15px;height:15px;color:#000;white-space:pre;font-size:11px;font-family:'Liberation Sans',sans-serif;">1</div>
<div style="left:422px;top:416px;width:975px;height:1px;background:#dcdcdc;"></div>
<div style="left:716px;top:397px;width:1px;height:20px;background:#e5e5e5;"></div>
<div style="left:836px;top:397px;width:1px;height:20px;background:#e5e5e5;"></div>
<div style="left:936px;top:397px;width:1px;height:20px;background:#e5e5e5;"></div>
<div style="left:1057px;top:397px;width:1px;height:20px;background:#e5e5e5;"></div>
<div style="left:1157px;top:397px;width:1px;height:20px;background:#e5e5e5;"></div>
<div style="left:1397px;top:397px;width:1px;height:20px;background:#e5e5e5;"></div>
<svg style="left:450.5px;top:401px;" width="9" height="11" viewBox="0 0 9 11"><path d="M4.5 0.3L8.7 3.600v4.200L3.800 11 0.3 7.400V3.600z" fill="#8c8c8c"/><path d="M4.5 0.3L8.700 3.600 3.800 7 0.300 3.600z" fill="#1414ff"/><path d="M3.800 7L8.700 3.600v4.200L3.800 11z" fill="#0a0a0a"/><path d="M0.300 3.600L3.800 7v4L0.300 7.400z" fill="#8c8c8c"/><path d="M1.200 5.500l2 2v2.300l-2-2z" fill="#a8d0ff"/><path d="M5 7.800l2.800-2v1.200L5 9z" fill="#8c8c8c"/><g fill="#b8dcff"><rect x="4" y="1.500" width="1" height="1"/><rect x="3" y="2.500" width="1" height="1"/><rect x="5" y="2.500" width="1" height="1"/><rect x="2" y="3.500" width="1" height="1"/><rect x="4" y="3.500" width="1" height="1"/><rect x="6" y="3.500" width="1" height="1"/><rect x="3" y="4.500" width="1" height="1"/><rect x="5" y="4.500" width="1" height="1"/><rect x="4" y="5.500" width="1" height="1"/></g></svg>
<div style="left:467.00px;top:399.00px;line-height:15px;height:15px;color:#000;white-space:pre;font-size:11px;font-family:'DejaVu Sans',sans-serif;letter-spacing:-0.380px;">op2</div>
<div style="left:721.00px;top:400.00px;line-height:15px;height:15px;color:#000;white-space:pre;font-size:11px;font-family:'Liberation Sans',sans-serif;letter-spacing:-0.245px;">INT</div>
<div style="left:841.50px;top:399.00px;line-height:15px;height:15px;color:#000;white-space:pre;font-size:11px;font-family:'Liberation Sans',sans-serif;">2</div>
<div style="left:422px;top:435px;width:975px;height:1px;background:#dcdcdc;"></div>
<div style="left:716px;top:416px;width:1px;height:20px;background:#e5e5e5;"></div>
<div style="left:836px;top:416px;width:1px;height:20px;background:#e5e5e5;"></div>
<div style="left:936px;top:416px;width:1px;height:20px;background:#e5e5e5;"></div>
<div style="left:1057px;top:416px;width:1px;height:20px;background:#e5e5e5;"></div>
<div style="left:1157px;top:416px;width:1px;height:20px;background:#e5e5e5;"></div>
<div style="left:1397px;top:416px;width:1px;height:20px;background:#e5e5e5;"></div>
<svg style="left:450.5px;top:420px;" width="9" height="11" viewBox="0 0 9 11"><path d="M4.5 0.3L8.7 3.600v4.200L3.800 11 0.3 7.400V3.600z" fill="#8c8c8c"/><path d="M4.5 0.3L8.700 3.600 3.800 7 0.300 3.600z" fill="#1414ff"/><path d="M3.800 7L8.700 3.600v4.200L3.800 11z" fill="#0a0a0a"/><path d="M0.300 3.600L3.800 7v4L0.300 7.400z" fill="#8c8c8c"/><path d="M1.200 5.500l2 2v2.300l-2-2z" fill="#a8d0ff"/><path d="M5 7.800l2.800-2v1.200L5 9z" fill="#8c8c8c"/><g fill="#b8dcff"><rect x="4" y="1.500" width="1" height="1"/><rect x="3" y="2.500" width="1" height="1"/><rect x="5" y="2.500" width="1" height="1"/><rect x="2" y="3.500" width="1" height="1"/><rect x="4" y="3.500" width="1" height="1"/><rect x="6" y="3.500" width="1" height="1"/><rect x="3" y="4.500" width="1" height="1"/><rect x="5" y="4.500" width="1" height="1"/><rect x="4" y="5.500" width="1" height="1"/></g></svg>
<div style="left:467.00px;top:418.00px;line-height:15px;height:15px;color:#000;white-space:pre;font-size:11px;font-family:'DejaVu Sans',sans-serif;letter-spacing:-0.308px;">res</div>
<div style="left:721.00px;top:419.00px;line-height:15px;height:15px;color:#000;white-space:pre;font-size:11px;font-family:'Liberation Sans',sans-serif;letter-spacing:-1.013px;">REAL</div>
<div style="left:841.50px;top:418.00px;line-height:15px;height:15px;color:#000;white-space:pre;font-size:11px;font-family:'Liberation Sans',sans-serif;">-1</div>
<div style="left:422px;top:454px;width:975px;height:1px;background:#dcdcdc;"></div>
<div style="left:716px;top:435px;width:1px;height:20px;background:#e5e5e5;"></div>
<div style="left:836px;top:435px;width:1px;height:20px;background:#e5e5e5;"></div>
<div style="left:936px;top:435px;width:1px;height:20px;background:#e5e5e5;"></div>
<div style="left:1057px;top:435px;width:1px;height:20px;background:#e5e5e5;"></div>
<div style="left:1157px;top:435px;width:1px;height:20px;background:#e5e5e5;"></div>
<div style="left:1397px;top:435px;width:1px;height:20px;background:#e5e5e5;"></div>
<svg style="left:450.5px;top:439px;" width="9" height="11" viewBox="0 0 9 11"><path d="M4.5 0.3L8.7 3.600v4.200L3.800 11 0.3 7.400V3.600z" fill="#8c8c8c"/><path d="M4.5 0.3L8.700 3.600 3.800 7 0.300 3.600z" fill="#1414ff"/><path d="M3.800 7L8.700 3.600v4.200L3.800 11z" fill="#0a0a0a"/><path d="M0.300 3.600L3.800 7v4L0.300 7.400z" fill="#8c8c8c"/><path d="M1.200 5.500l2 2v2.300l-2-2z" fill="#a8d0ff"/><path d="M5 7.800l2.800-2v1.200L5 9z" fill="#8c8c8c"/><g fill="#b8dcff"><rect x="4" y="1.500" width="1" height="1"/><rect x="3" y="2.500" width="1" height="1"/><rect x="5" y="2.500" width="1" height="1"/><rect x="2" y="3.500" width="1" height="1"/><rect x="4" y="3.500" width="1" height="1"/><rect x="6" y="3.500" width="1" height="1"/><rect x="3" y="4.500" width="1" height="1"/><rect x="5" y="4.500" width="1" height="1"/><rect x="4" y="5.500" width="1" height="1"/></g></svg>
<div style="left:467.00px;top:437.00px;line-height:15px;height:15px;color:#000;white-space:pre;font-size:11px;font-family:'DejaVu Sans',sans-serif;letter-spacing:-0.290px;">test</div>
<div style="left:721.00px;top:438.00px;line-height:15px;height:15px;color:#000;white-space:pre;font-size:11px;font-family:'Liberation Sans',sans-serif;letter-spacing:-0.920px;">BOOL</div>
<div style="left:838px;top:436px;width:37px;height:18px;background:#000;"></div>
<div style="left:841.50px;top:437.00px;line-height:15px;height:15px;color:#fff;white-space:pre;font-size:11px;font-family:'Liberation Sans',sans-serif;letter-spacing:-0.750px;">FALSE</div>
<div style="left:422px;top:473px;width:975px;height:1px;background:#dcdcdc;"></div>
<div style="left:716px;top:454px;width:1px;height:20px;background:#e5e5e5;"></div>
<div style="left:836px;top:454px;width:1px;height:20px;background:#e5e5e5;"></div>
<div style="left:936px;top:454px;width:1px;height:20px;background:#e5e5e5;"></div>
<div style="left:1057px;top:454px;width:1px;height:20px;background:#e5e5e5;"></div>
<div style="left:1157px;top:454px;width:1px;height:20px;background:#e5e5e5;"></div>
<div style="left:1397px;top:454px;width:1px;height:20px;background:#e5e5e5;"></div>
<svg style="left:450.5px;top:458px;" width="9" height="11" viewBox="0 0 9 11"><path d="M4.5 0.3L8.7 3.600v4.200L3.800 11 0.3 7.400V3.600z" fill="#8c8c8c"/><path d="M4.5 0.3L8.700 3.600 3.800 7 0.300 3.600z" fill="#1414ff"/><path d="M3.800 7L8.700 3.600v4.200L3.800 11z" fill="#0a0a0a"/><path d="M0.300 3.600L3.800 7v4L0.300 7.400z" fill="#8c8c8c"/><path d="M1.200 5.500l2 2v2.300l-2-2z" fill="#a8d0ff"/><path d="M5 7.800l2.800-2v1.200L5 9z" fill="#8c8c8c"/><g fill="#b8dcff"><rect x="4" y="1.500" width="1" height="1"/><rect x="3" y="2.500" width="1" height="1"/><rect x="5" y="2.500" width="1" height="1"/><rect x="2" y="3.500" width="1" height="1"/><rect x="4" y="3.500" width="1" height="1"/><rect x="6" y="3.500" width="1" height="1"/><rect x="3" y="4.500" width="1" height="1"/><rect x="5" y="4.500" width="1" height="1"/><rect x="4" y="5.500" width="1" height="1"/></g></svg>
<div style="left:467.00px;top:456.00px;line-height:15px;height:15px;color:#000;white-space:pre;font-size:11px;font-family:'DejaVu Sans',sans-serif;letter-spacing:-0.397px;">TON_0</div>
<div style="left:721.00px;top:457.00px;line-height:15px;height:15px;color:#000;white-space:pre;font-size:11px;font-family:'Liberation Sans',sans-serif;letter-spacing:-0.677px;">TON</div>
<svg style="left:427.5px;top:458.5px;" width="9" height="9" viewBox="0 0 9 9"><rect x="0.500" y="0.500" width="8" height="8" fill="#fff" stroke="#9a9a9a"/><path d="M2.500 4.500h4M4.500 2.500v4" stroke="#202020" stroke-width="1"/></svg>
<div style="left:1416px;top:162px;width:23px;height:317px;background:linear-gradient(90deg,#fdfdfa,#e9eadf 40%,#c6c8b2);"></div>
<div style="left:1440px;top:138px;width:1px;height:856px;background:#8e9bbc;"></div>
<div style="left:421px;top:162px;width:1px;height:318px;background:#a4a4a4;"></div>
<div style="left:1415px;top:162px;width:1px;height:317px;background:#a8a8a8;"></div>
<div style="left:1416px;top:163px;width:21px;height:20px;background:#e8e8f4;border:1px solid #3c78d8;"></div>
<svg style="left:1419px;top:166px;" width="13" height="14" viewBox="0 0 13 14"><path d="M0 1.500h6M0 13.500h9" stroke="#1c28e0" stroke-width="1"/><path d="M2 3.500h7M10 3.500h2M2 5.500h5M8 5.500h2.500M2 7.500h6M9 7.500h2M2 11.500h5M8 11.500h3" stroke="#101010" stroke-width="1"/><path d="M2 9.500h10" stroke="#109010" stroke-width="1"/></svg>
<svg style="left:1419px;top:189px;" width="14" height="14" viewBox="0 0 14 14"><rect x="0.5" y="0.5" width="13" height="13" fill="#fff" stroke="#101010"/><rect x="0" y="0" width="14" height="2" fill="#1010f0"/><path d="M1 5.500h12M1 8.500h12M1 11h12M6.500 2v11.500M10 2v11.500" stroke="#d0d0d0" stroke-width="1"/><rect x="0.500" y="0.500" width="13" height="13" fill="none" stroke="#101010"/><rect x="0" y="0" width="14" height="2" fill="#1010f0"/></svg>
<div style="left:421px;top:479px;width:1019px;height:2px;background:#8d929c;"></div>
<div style="left:421px;top:481px;width:1019px;height:4px;background:#f0f0f0;"></div>
<div style="left:421px;top:485px;width:1019px;height:1px;background:#a0a0a0;"></div>
<svg style="left:919px;top:480.5px;" width="24" height="6" viewBox="0 0 24 6"><path d="M0.500 5.500l4-4.500 4 4.500z" fill="#a8a8a8" stroke="#8a8a8a" stroke-width=".8"/><path d="M15.500 0.800l4 4.500 4-4.500z" fill="#a8a8a8" stroke="#8a8a8a" stroke-width=".8"/></svg>
<div style="left:470px;top:486px;width:16px;height:458px;background:#f0f0f0;"></div>
<div style="left:487px;top:665px;width:936px;height:98px;background:#ffffe1;"></div>
<div style="left:468px;top:486px;width:2px;height:458px;background:#008080;"></div>
<div style="left:470px;top:520px;width:953px;height:1px;background:#d0d0d0;"></div>
<div style="left:470px;top:565px;width:953px;height:1px;background:#d0d0d0;"></div>
<div style="left:470px;top:664px;width:953px;height:1px;background:#d0d0d0;"></div>
<div style="left:470px;top:763px;width:953px;height:1px;background:#d0d0d0;"></div>
<div style="left:470px;top:808px;width:953px;height:1px;background:#d0d0d0;"></div>
<div style="left:470px;top:907px;width:953px;height:1px;background:#d0d0d0;"></div>
<div style="left:470px;top:943px;width:953px;height:1px;background:#d0d0d0;"></div>
<div style="left:470px;top:486px;width:953px;height:1px;background:#f4f4f4;"></div>
<div style="left:453.50px;top:477.00px;line-height:14px;height:14px;color:#008080;white-space:pre;font-size:9.5px;font-family:'DejaVu Sans',sans-serif;letter-spacing:0.203px;clip-path:inset(9px 0 0 0);">28</div>
<div style="left:453.50px;top:522.00px;line-height:13.5px;height:13.5px;color:#008080;white-space:pre;font-size:9.5px;font-family:'DejaVu Sans',sans-serif;letter-spacing:0.203px;">29</div>
<div style="left:453.50px;top:567.00px;line-height:13.5px;height:13.5px;color:#008080;white-space:pre;font-size:9.5px;font-family:'DejaVu Sans',sans-serif;letter-spacing:0.203px;">30</div>
<div style="left:453.50px;top:666.00px;line-height:13.5px;height:13.5px;color:#008080;white-space:pre;font-size:9.5px;font-family:'DejaVu Sans',sans-serif;letter-spacing:0.203px;">31</div>
<div style="left:453.50px;top:765.00px;line-height:13.5px;height:13.5px;color:#008080;white-space:pre;font-size:9.5px;font-family:'DejaVu Sans',sans-serif;letter-spacing:0.203px;">32</div>
<div style="left:453.50px;top:810.00px;line-height:13.5px;height:13.5px;color:#008080;white-space:pre;font-size:9.5px;font-family:'DejaVu Sans',sans-serif;letter-spacing:0.203px;">33</div>
<div style="left:446.00px;top:908.00px;line-height:16px;height:16px;color:#008080;white-space:pre;font-size:11px;font-family:'Liberation Mono',monospace;letter-spacing:0.229px;">RET</div>
<div style="left:505.40px;top:487.00px;line-height:16px;height:16px;color:#000;white-space:pre;font-size:11.5px;font-family:'Liberation Mono',monospace;letter-spacing:0.598px;-webkit-text-stroke:0.300px #000;">End:</div>
<div style="left:505.40px;top:532.00px;line-height:16px;height:16px;color:#008080;white-space:pre;font-size:11.5px;font-family:'Liberation Mono',monospace;font-style:italic;letter-spacing:0.596px;">Timer:</div>
<div style="left:505.40px;top:775.00px;line-height:16px;height:16px;color:#008080;white-space:pre;font-size:11.5px;font-family:'Liberation Mono',monospace;font-style:italic;letter-spacing:0.598px;">Using a function:</div>
<svg style="left:472px;top:568.5px;" width="11" height="11" viewBox="0 0 11 11"><path d="M3.300 0h4.400L11 3.300v4.400L7.700 11H3.300L0 7.700V3.300z" fill="#8b0000"/></svg>
<svg style="left:472.5px;top:668px;" width="10" height="11" viewBox="0 0 10 11"><path d="M0.700 3.500h4V0.800l4.600 4.700-4.600 4.700V7.500h-4z" fill="#ffff00" stroke="#000" stroke-width="1"/></svg>
<div style="left:589px;top:566px;width:46px;height:19px;background:#f08080;"></div>
<div style="left:593.55px;top:567.00px;line-height:16px;height:16px;color:#3a0000;white-space:pre;font-size:11.5px;font-family:'Liberation Mono',monospace;letter-spacing:0.597px;">TON_0</div>
<div style="left:573px;top:585px;width:79px;height:61px;background:#e2e9f6;border:1px solid #1b3a78;"></div>
<div style="left:601.55px;top:587.00px;line-height:16px;height:16px;color:#000;white-space:pre;font-size:11.5px;font-family:'Liberation Mono',monospace;font-weight:bold;letter-spacing:0.594px;">TON</div>
<div style="left:576.60px;top:604.00px;line-height:16px;height:16px;color:#000;white-space:pre;font-size:11.5px;font-family:'Liberation Mono',monospace;letter-spacing:0.594px;">IN</div>
<div style="left:576.60px;top:622.00px;line-height:16px;height:16px;color:#000;white-space:pre;font-size:11.5px;font-family:'Liberation Mono',monospace;letter-spacing:0.594px;">PT</div>
<div style="left:639.50px;top:604.00px;line-height:16px;height:16px;color:#000;white-space:pre;font-size:11.5px;font-family:'Liberation Mono',monospace;">Q</div>
<div style="left:632.00px;top:622.00px;line-height:16px;height:16px;color:#000;white-space:pre;font-size:11.5px;font-family:'Liberation Mono',monospace;letter-spacing:0.594px;">ET</div>
<div style="left:521.50px;top:604.00px;line-height:16px;height:16px;color:#808000;white-space:pre;font-size:11.5px;font-family:'Liberation Mono',monospace;letter-spacing:0.598px;">TRUE</div>
<div style="left:521.50px;top:622.00px;line-height:16px;height:16px;color:#000;white-space:pre;font-size:11.5px;font-family:'Liberation Mono',monospace;letter-spacing:0.598px;">T#5S</div>
<div style="left:555px;top:609.0px;width:18px;height:3px;background:#0000ff;"></div>
<div style="left:555px;top:628px;width:18px;height:1px;background:#000;"></div>
<div style="left:652px;top:609.0px;width:186.5px;height:3px;background:#000;"></div>
<div style="left:667px;top:604px;width:49px;height:14px;background:#000;"></div>
<div style="left:676.01px;top:604.00px;line-height:16px;height:16px;color:#fff;white-space:pre;font-size:10.67px;font-family:'Liberation Mono',monospace;font-weight:bold;">FALSE</div>
<div style="left:652px;top:628px;width:8.5px;height:1px;background:#0000ff;"></div>
<div style="left:664.00px;top:622.00px;line-height:16px;height:16px;color:#000;white-space:pre;font-size:11.5px;font-family:'Liberation Mono',monospace;letter-spacing:0.598px;">elapsed</div>
<div style="left:722px;top:622px;width:109px;height:14px;background:#fdd9b5;border:1px solid #b8661a;"></div>
<div style="left:757.81px;top:622.00px;line-height:16px;height:16px;color:#1e1e1e;white-space:pre;font-size:10.67px;font-family:'Liberation Mono',monospace;font-weight:bold;">T#20ms</div>
<svg style="left:595.5px;top:602.5px;" width="33" height="33" viewBox="0 0 33 33"><rect x="0" y="0" width="32" height="32" fill="none" stroke="#f4f6fb" stroke-width="1"/><circle cx="16" cy="16" r="15.300" fill="#c4c4c4" stroke="#3a3a3a" stroke-width="1"/><circle cx="16" cy="16" r="12.500" fill="none" stroke="#3a3a3a" stroke-width="1" stroke-dasharray="0.800 5.740"/><path d="M16 2v4M16 26v4M2 16h4M26 16h4" stroke="#3a3a3a" stroke-width="1.400"/><path d="M6 20.500h10V11h10" fill="none" stroke="#f04040" stroke-width="1.600"/></svg>
<div style="left:530.00px;top:703.00px;line-height:16px;height:16px;color:#000;white-space:pre;font-size:11.5px;font-family:'Liberation Mono',monospace;letter-spacing:0.598px;">elapsed</div>
<div style="left:586px;top:703px;width:109px;height:14px;background:#fdd9b5;border:1px solid #b8661a;"></div>
<div style="left:621.81px;top:703.00px;line-height:16px;height:16px;color:#1e1e1e;white-space:pre;font-size:10.67px;font-family:'Liberation Mono',monospace;font-weight:bold;">T#20ms</div>
<div style="left:695px;top:709px;width:17px;height:1px;background:#000;"></div>
<div style="left:694px;top:727px;width:18px;height:1px;background:#000;"></div>
<div style="left:660.40px;top:721.00px;line-height:16px;height:16px;color:#000;white-space:pre;font-size:11.5px;font-family:'Liberation Mono',monospace;letter-spacing:0.598px;">T#3s</div>
<div style="left:712px;top:684px;width:73px;height:61px;background:#e2e9f6;border:1px solid #1b3a78;"></div>
<div style="left:741.30px;top:687.00px;line-height:16px;height:16px;color:#000;white-space:pre;font-size:11.5px;font-family:'Liberation Mono',monospace;font-weight:bold;letter-spacing:0.594px;">GE</div>
<div style="left:741.09px;top:700.00px;line-height:30px;height:30px;color:#00008b;white-space:pre;font-size:27px;font-family:'Liberation Sans',sans-serif;">≥</div>
<div style="left:803px;top:702px;width:85px;height:17px;background:#ffff00;"></div>
<div style="left:785px;top:708.0px;width:26.5px;height:3px;background:#000;"></div>
<div style="left:811px;top:703px;width:15.5px;height:14px;background:#f3e3f3;border:1px dotted #303030;"></div>
<div style="left:815.55px;top:703.00px;line-height:16px;height:16px;color:#000;white-space:pre;font-size:11.5px;font-family:'Liberation Mono',monospace;">D</div>
<div style="left:828px;top:703px;width:50px;height:14px;background:#000;"></div>
<div style="left:837.51px;top:703.00px;line-height:16px;height:16px;color:#fff;white-space:pre;font-size:10.67px;font-family:'Liberation Mono',monospace;font-weight:bold;">FALSE</div>
<div style="left:566px;top:828px;width:73px;height:61px;background:#e2e9f6;border:1px solid #1b3a78;"></div>
<div style="left:587.80px;top:831.00px;line-height:16px;height:16px;color:#000;white-space:pre;font-size:11.5px;font-family:'Liberation Mono',monospace;font-weight:bold;letter-spacing:0.598px;">MULT</div>
<div style="left:569.60px;top:847.00px;line-height:16px;height:16px;color:#000;white-space:pre;font-size:11.5px;font-family:'Liberation Mono',monospace;letter-spacing:0.594px;">in1</div>
<div style="left:569.60px;top:865.00px;line-height:16px;height:16px;color:#000;white-space:pre;font-size:11.5px;font-family:'Liberation Mono',monospace;letter-spacing:0.594px;">in2</div>
<div style="left:521.50px;top:847.00px;line-height:16px;height:16px;color:#000;white-space:pre;font-size:11.5px;font-family:'Liberation Mono',monospace;letter-spacing:0.594px;">1.0</div>
<div style="left:521.50px;top:865.00px;line-height:16px;height:16px;color:#000;white-space:pre;font-size:11.5px;font-family:'Liberation Mono',monospace;letter-spacing:0.594px;">2.0</div>
<div style="left:548.5px;top:853px;width:17.5px;height:1px;background:#000;"></div>
<div style="left:548.5px;top:871px;width:17.5px;height:1px;background:#000;"></div>
<div style="left:639px;top:853px;width:27px;height:1px;background:#000;"></div>
<div style="left:669.80px;top:847.00px;line-height:16px;height:16px;color:#000;white-space:pre;font-size:11.5px;font-family:'Liberation Mono',monospace;">f</div>
<div style="left:683px;top:847px;width:83px;height:14px;background:#fdd9b5;border:1px solid #b8661a;"></div>
<div style="left:721.80px;top:847.00px;line-height:16px;height:16px;color:#1e1e1e;white-space:pre;font-size:10.67px;font-family:'Liberation Mono',monospace;font-weight:bold;">7</div>
<div style="left:1424px;top:486px;width:16px;height:490px;background:#f0f0f0;"></div>
<div style="left:1425px;top:879px;width:14px;height:80px;background:#cdcdcd;"></div>
<svg style="left:1427px;top:490px;" width="10" height="7" viewBox="0 0 10 7"><path d="M1 6l4-4.500L9 6" fill="none" stroke="#505050" stroke-width="1.800"/></svg>
<svg style="left:1427px;top:964px;" width="10" height="7" viewBox="0 0 10 7"><path d="M1 1l4 4.500L9 1" fill="none" stroke="#505050" stroke-width="1.800"/></svg>
<div style="left:421px;top:977px;width:1019px;height:16px;background:#f0f0f0;"></div>
<div style="left:438px;top:978px;width:30px;height:14px;background:#cdcdcd;"></div>
<svg style="left:426px;top:980px;" width="7" height="10" viewBox="0 0 7 10"><path d="M6 1L1.500 5 6 9" fill="none" stroke="#505050" stroke-width="1.800"/></svg>
<svg style="left:1411px;top:980px;" width="7" height="10" viewBox="0 0 7 10"><path d="M1 1l4.500 4L1 9" fill="none" stroke="#505050" stroke-width="1.800"/></svg>
<div style="left:1278px;top:956px;width:21px;height:20px;background:#fff;border:1px solid #a6a6a6;"></div>
<div style="left:1298px;top:956px;width:21px;height:20px;background:#f0f0f0;border:1px solid #a6a6a6;"></div>
<div style="left:1318px;top:956px;width:21px;height:20px;background:#f0f0f0;border:1px solid #a6a6a6;"></div>
<svg style="left:1283px;top:959px;" width="11" height="15" viewBox="0 0 11 15"><path d="M1 0.500v12l3-3 2 5 2-1-2-4.500h4.500z" fill="#000"/></svg>
<svg style="left:1301px;top:959px;" width="15" height="15" viewBox="0 0 15 15"><path d="M7.500 0v15M0 7.500h15" stroke="#000" stroke-width="1.200"/><path d="M7.500 0l-2 2.500h4zM7.500 15l-2-2.500h4zM0 7.500l2.500-2v4zM15 7.500l-2.500-2v4z" fill="#000"/></svg>
<svg style="left:1320px;top:958px;" width="16" height="16" viewBox="0 0 16 16"><circle cx="6.500" cy="6.500" r="5" fill="#cfe4fa" stroke="#5a6a7a" stroke-width="1.300"/><path d="M10.500 10.500l4.500 4.500" stroke="#c8a040" stroke-width="2.600"/></svg>
<div style="left:1358px;top:956px;width:46px;height:20px;background:#f0f0f0;border:1px solid #a6a6a6;"></div>
<div style="left:1364.00px;top:960.00px;line-height:15px;height:15px;color:#000;white-space:pre;font-size:11px;font-family:'Liberation Sans',sans-serif;letter-spacing:0.159px;">100 %</div>
<div style="left:1403px;top:956px;width:21px;height:20px;background:#f0f0f0;border:1px solid #a6a6a6;"></div>
<svg style="left:1405px;top:958px;" width="17" height="16" viewBox="0 0 17 16"><rect x="0.700" y="2.700" width="10" height="10" fill="#fff" stroke="#000" stroke-width="1.300"/><circle cx="8" cy="6.500" r="4.500" fill="#dfe8f0" stroke="#000" stroke-width="1.300"/><path d="M11 10l5 5" stroke="#000" stroke-width="2.200"/><path d="M6 5h4M6 7h4" stroke="#000" stroke-width=".9"/></svg>
<div style="left:1447px;top:117px;width:475px;height:856px;background:#4d6082;border:1px solid #5b6e92;"></div>
<div style="left:1452.50px;top:121.00px;line-height:16px;height:16px;color:#fff;white-space:pre;font-size:12px;font-family:'Liberation Sans',sans-serif;letter-spacing:-0.190px;">Properties</div>
<svg style="left:1873.0px;top:126.0px;" width="7" height="4" viewBox="0 0 7 4"><path d="M0 0h7l-3.5 4z" fill="#e8ecf5"/></svg>
<svg style="left:1890px;top:123px;" width="8" height="12" viewBox="0 0 8 12"><path d="M1.500 0.500h5M2.500 0.500v6M5.500 0.500v6M0.500 6.500h7M4 6.500V12" stroke="#e8ecf5" stroke-width="1" fill="none"/><rect x="4.500" y="1" width="1.500" height="5.500" fill="#e8ecf5"/></svg>
<svg style="left:1905.5px;top:124px;" width="9" height="9" viewBox="0 0 9 9"><path d="M0.500 0.500l8 8M8.500 0.500l-8 8" stroke="#e8ecf5" stroke-width="1.300"/></svg>
<div style="left:1448px;top:139px;width:473px;height:24px;background:linear-gradient(#fdfdfd,#f4f4f4 60%,#e9e9e9);"></div>
<svg style="left:1456px;top:146px;" width="10" height="11" viewBox="0 0 10 11"><path d="M0.500 0.500h9L6 5v5.500L4 9V5z" fill="#fff" stroke="#3a3a3a" stroke-width="1"/></svg>
<div style="left:1471.00px;top:144.00px;line-height:16px;height:16px;color:#1e1e1e;white-space:pre;font-size:12px;font-family:'Liberation Sans',sans-serif;letter-spacing:-0.512px;">Filter</div>
<svg style="left:1502.0px;top:151.0px;" width="5" height="3" viewBox="0 0 5 3"><path d="M0 0h5l-2.5 3z" fill="#1e1e1e"/></svg>
<div style="left:1514.5px;top:143px;width:1px;height:16px;background:#b0b0b0;"></div>
<svg style="left:1523px;top:145px;" width="12" height="13" viewBox="0 0 12 13"><path d="M0.500 2l4 4-4 4z" fill="#1e1e1e"/><path d="M7.500 0.500l2.500 2.500-2.500 2.500L5 3zM7.500 7.500l2.500 2.500-2.500 2.500L5 10z" fill="#10a090" stroke="#1e1e1e" stroke-width=".7"/></svg>
<div style="left:1538.60px;top:144.00px;line-height:16px;height:16px;color:#1e1e1e;white-space:pre;font-size:12px;font-family:'Liberation Sans',sans-serif;letter-spacing:-0.517px;">Sort by</div>
<svg style="left:1579.5px;top:151.0px;" width="5" height="3" viewBox="0 0 5 3"><path d="M0 0h5l-2.5 3z" fill="#1e1e1e"/></svg>
<div style="left:1592.50px;top:142.00px;line-height:10px;height:10px;color:#2a2ad0;white-space:pre;font-size:9px;font-family:'Liberation Sans',sans-serif;font-weight:bold;">A</div>
<div style="left:1592.50px;top:151.00px;line-height:10px;height:10px;color:#901010;white-space:pre;font-size:9px;font-family:'Liberation Sans',sans-serif;font-weight:bold;">Z</div>
<svg style="left:1601px;top:144px;" width="6" height="15" viewBox="0 0 6 15"><path d="M3 0v12" stroke="#3a3a3a" stroke-width="1.200"/><path d="M0 10.500h6L3 14.500z" fill="#3a3a3a"/></svg>
<div style="left:1609.80px;top:144.00px;line-height:16px;height:16px;color:#1e1e1e;white-space:pre;font-size:12px;font-family:'Liberation Sans',sans-serif;letter-spacing:-0.516px;">Sort order</div>
<svg style="left:1664.5px;top:151.0px;" width="5" height="3" viewBox="0 0 5 3"><path d="M0 0h5l-2.5 3z" fill="#1e1e1e"/></svg>
<div style="left:1448px;top:163px;width:473px;height:746px;background:#fff;border:1px solid #6a6a6a;"></div>
<div style="left:1455.00px;top:168.00px;line-height:16px;height:16px;color:#000;white-space:pre;font-size:12px;font-family:'Liberation Sans',sans-serif;letter-spacing:-0.045px;">Property</div>
<div style="left:1515.00px;top:168.00px;line-height:16px;height:16px;color:#000;white-space:pre;font-size:12px;font-family:'Liberation Sans',sans-serif;letter-spacing:-0.362px;">Value</div>
<div style="left:1508px;top:165px;width:1px;height:23px;background:#e5e5e5;"></div>
<div style="left:1448px;top:909px;width:473px;height:64px;background:#f0f0f0;"></div>
<div style="left:1448px;top:916px;width:473px;height:1px;background:#e3e3e3;"></div>
<div style="left:1453.30px;top:917.00px;line-height:15px;height:15px;color:#000;white-space:pre;font-size:11px;font-family:'Liberation Sans',sans-serif;letter-spacing:-0.212px;">Description</div>
<div style="left:1447px;top:973px;width:64px;height:20px;background:#fff;"></div>
<div style="left:1453.30px;top:976.00px;line-height:16px;height:16px;color:#1e1e1e;white-space:pre;font-size:12px;font-family:'Liberation Sans',sans-serif;letter-spacing:-0.200px;">Properties</div>
<div style="left:1511px;top:974px;width:55px;height:19px;background:#4d6082;"></div>
<div style="left:1518.60px;top:976.00px;line-height:16px;height:16px;color:#fff;white-space:pre;font-size:12px;font-family:'Liberation Sans',sans-serif;letter-spacing:-0.139px;">Toolbox</div>
<div style="left:14.00px;top:1000.00px;line-height:16px;height:16px;color:#fff;white-space:pre;font-size:12px;font-family:'Liberation Sans',sans-serif;letter-spacing:-0.269px;">Error List</div>
<div style="left:72.50px;top:1000.00px;line-height:16px;height:16px;color:#fff;white-space:pre;font-size:12px;font-family:'Liberation Sans',sans-serif;letter-spacing:0.245px;">Output</div>
<div style="left:14px;top:1020px;width:46px;height:5px;background:#4d6082;"></div>
<div style="left:72px;top:1020px;width:38px;height:5px;background:#4d6082;"></div>
<svg style="left:12px;top:1030px;" width="17" height="12" viewBox="0 0 17 12"><path d="M4 1.500h12l-3 9H1z" fill="none" stroke="#fff" stroke-width="1.400"/></svg>
<div style="left:36.50px;top:1029.00px;line-height:16px;height:16px;color:#fff;white-space:pre;font-size:12px;font-family:'Liberation Sans',sans-serif;letter-spacing:-0.637px;">Ready</div>
<svg style="left:1146px;top:1029px;" width="15" height="16" viewBox="0 0 15 16"><rect x="1" y="1" width="13" height="12" fill="#007acc" stroke="#fff" stroke-width="1"/><rect x="0" y="12.500" width="15" height="3" fill="#e8c000"/></svg>
<div style="left:1151.72px;top:1029.00px;line-height:14px;height:14px;color:#fff;white-space:pre;font-size:10px;font-family:'Liberation Sans',sans-serif;">0</div>
<svg style="left:1580px;top:1030px;" width="11" height="13" viewBox="0 0 11 13"><path d="M5.500 12.500V2M1 6.500L5.500 1.500 10 6.500" fill="none" stroke="#fff" stroke-width="1.800"/></svg>
<div style="left:1599.66px;top:1029.00px;line-height:16px;height:16px;color:#fff;white-space:pre;font-size:12px;font-family:'Liberation Sans',sans-serif;">0</div>
<svg style="left:1630px;top:1029px;" width="13" height="13" viewBox="0 0 13 13"><path d="M1 12l.8-3.500L9.500 1l2.500 2.500-7.500 7.700z" fill="#d8d8d8"/><path d="M8.300 2.200l2.500 2.500" stroke="#007acc" stroke-width=".8"/></svg>
<div style="left:1650.80px;top:1029.00px;line-height:16px;height:16px;color:#fff;white-space:pre;font-size:12px;font-family:'Liberation Sans',sans-serif;letter-spacing:-0.930px;">73</div>
<svg style="left:1684px;top:1028px;" width="16" height="16" viewBox="0 0 16 16"><path d="M8 0.500L15.500 8 8 15.500 0.500 8z" fill="#e8e8e8"/><path d="M5.500 5.500L10 10M8 7.500v4" stroke="#007acc" stroke-width="1.300"/><circle cx="5.500" cy="5.500" r="1.300" fill="#007acc"/><circle cx="10" cy="10" r="1.300" fill="#007acc"/><circle cx="8" cy="11.500" r="1.300" fill="#007acc"/></svg>
<div style="left:1706.50px;top:1029.00px;line-height:16px;height:16px;color:#fff;white-space:pre;font-size:12px;font-family:'Liberation Sans',sans-serif;letter-spacing:-0.011px;">plc_control_tutorials</div>
<svg style="left:1835px;top:1029px;" width="16" height="14" viewBox="0 0 16 14"><path d="M8 13.500V8L2.500 2.500M8 8l5.500-5.500" fill="none" stroke="#e8e8e8" stroke-width="2"/><path d="M0.500 0.500h5l-5 5zM15.500 0.500h-5l5 5z" fill="#e8e8e8"/></svg>
<div style="left:1858.00px;top:1029.00px;line-height:16px;height:16px;color:#fff;white-space:pre;font-size:12px;font-family:'Liberation Sans',sans-serif;letter-spacing:-0.281px;">master</div>
<svg style="left:1899px;top:1033px;" width="9" height="5" viewBox="0 0 9 5"><path d="M0 5h9L4.500 0z" fill="#fff"/></svg>
</body></html>
